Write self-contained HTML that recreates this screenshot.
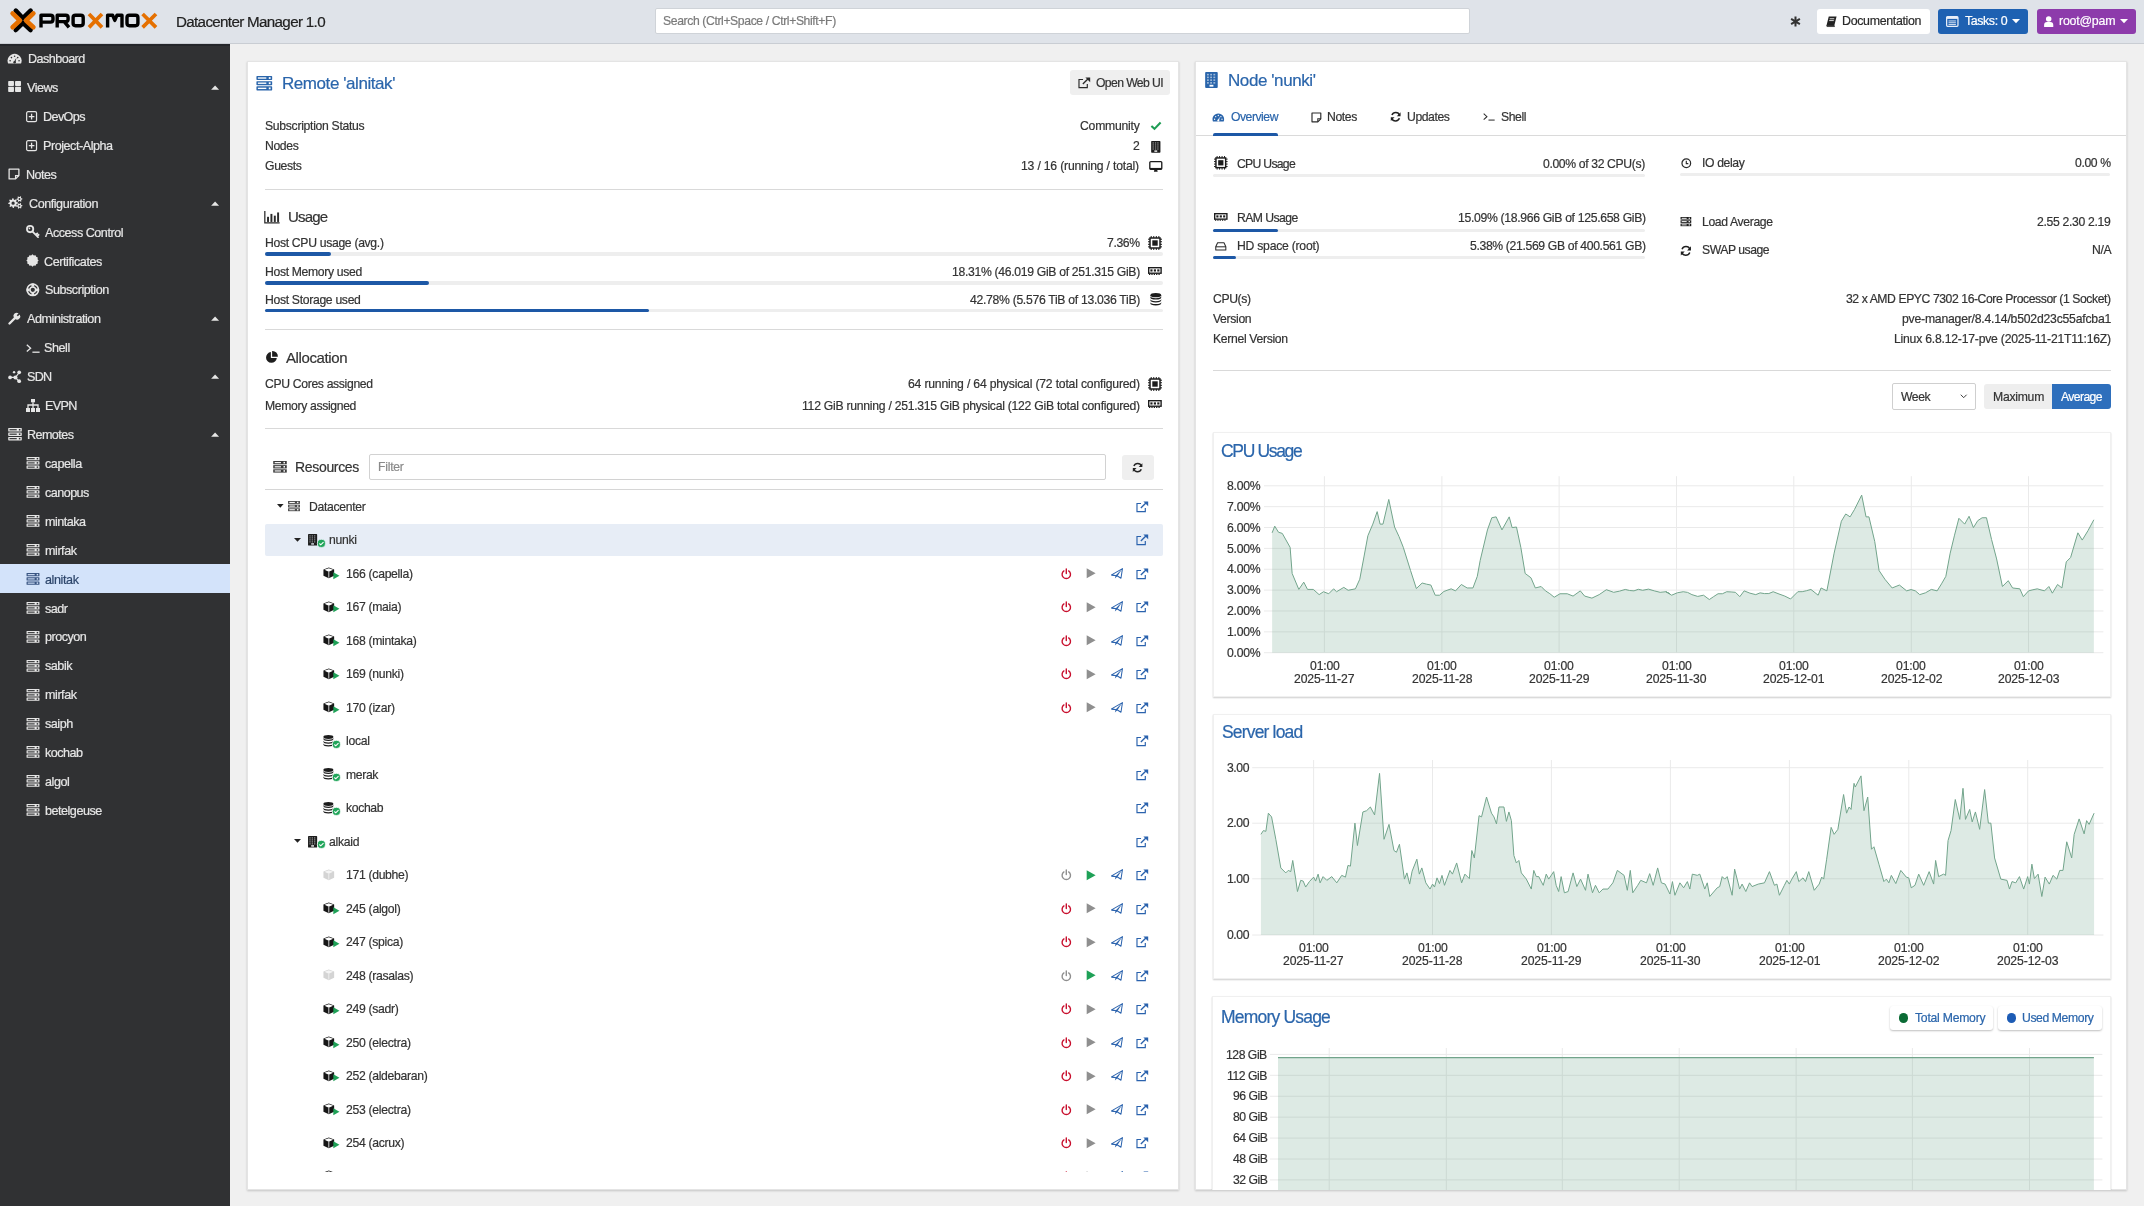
<!DOCTYPE html>
<html><head><meta charset="utf-8"><title>Proxmox Datacenter Manager</title><style>*{margin:0;padding:0;box-sizing:border-box}
html,body{width:2144px;height:1206px;overflow:hidden;background:#f0f0f0;font-family:"Liberation Sans",sans-serif;}
.t{position:absolute;white-space:nowrap;-webkit-font-smoothing:antialiased;will-change:transform;-webkit-text-stroke:0.2px currentColor;}
.r{position:absolute;}
.i{position:absolute;overflow:visible;}
</style></head><body>
<div class="r" style="left:0.00px;top:0.00px;width:2144.00px;height:43.00px;background:#dfe3e9;"></div>
<div class="r" style="left:0.00px;top:43.00px;width:2144.00px;height:1.00px;background:#c9cdd3;"></div>
<svg class="i" style="left:9px;top:8px" width="150" height="26" viewBox="9 8 150 26"><path d="M15.8 10.6 L22.9 18.2 L30.6 10.6" fill="none" stroke="#000" stroke-width="4.6" stroke-linecap="round" stroke-linejoin="round"/><path d="M15.8 30.0 L22.9 22.8 L30.6 30.0" fill="none" stroke="#000" stroke-width="4.6" stroke-linecap="round" stroke-linejoin="round"/><path d="M12.6 13.4 L19.9 20.5 L12.6 27.2" fill="none" stroke="#e57000" stroke-width="4.6" stroke-linecap="round" stroke-linejoin="round"/><path d="M33.4 13.4 L26.0 20.5 L33.4 27.2" fill="none" stroke="#e57000" stroke-width="4.6" stroke-linecap="round" stroke-linejoin="round"/><path d="M41 27.4 V15.2 H50.5 Q53 15.2 53 17.7 V19.6 Q53 22.1 50.5 22.1 H42.7" fill="none" stroke="#000" stroke-width="3.4" stroke-linejoin="round"/><path d="M57.2 27.4 V15.2 H65.8 Q68.1 15.2 68.1 17.5 V19.3 Q68.1 21.6 65.8 21.6 H58.9 M64.2 21.6 L69 27.4" fill="none" stroke="#000" stroke-width="3.4" stroke-linejoin="round"/><rect x="73.1" y="15.2" width="10.1" height="10.5" rx="2.4" fill="none" stroke="#000" stroke-width="3.4"/><path d="M89.0 14.0 L102.0 27.4 M102.0 14.0 L89.0 27.4" stroke="#e57000" stroke-width="3.7"/><path d="M107.6 27.4 V15.2 H112.6 L114.8 20.4 L117 15.2 H122 V27.4" fill="none" stroke="#000" stroke-width="3.4" stroke-linejoin="round"/><rect x="127" y="15.2" width="10.9" height="10.5" rx="2.4" fill="none" stroke="#000" stroke-width="3.4"/><path d="M142.6 14.0 L156.0 27.4 M156.0 14.0 L142.6 27.4" stroke="#e57000" stroke-width="3.7"/></svg>
<div class="t" style="top:11.58px;font-size:15.2px;line-height:19.0px;color:#212121;letter-spacing:-0.676px;left:176.00px;">Datacenter Manager 1.0</div>
<div class="r" style="left:654.50px;top:8.40px;width:815.40px;height:26.00px;background:#ffffff;border:1px solid #cfd3d8;box-sizing:border-box;border-radius:2px;"></div>
<div class="t" style="top:14.20px;font-size:12.2px;line-height:15.25px;color:#7a7a7a;letter-spacing:-0.386px;left:663.00px;">Search (Ctrl+Space / Ctrl+Shift+F)</div>
<svg class="i" style="left:1790.00px;top:16.00px;" width="11.00" height="11.00" viewBox="0 0 12 12"><path d="M6 0.5 V11.5 M1.2 3.2 L10.8 8.8 M1.2 8.8 L10.8 3.2" stroke="#333" stroke-width="2.2"/></svg>
<div class="r" style="left:1817.00px;top:9.00px;width:113.00px;height:25.00px;background:#ffffff;border-radius:3px;"></div>
<svg class="i" style="left:1825.50px;top:15.50px;" width="11.00" height="11.00" viewBox="0 0 12 12"><path d="M3 0.5 H11.5 L9 10.5 H0.5 Z" fill="#222"/><path d="M0.5 10.5 H9 L9.3 11.5 H0.8" fill="none" stroke="#222" stroke-width="0.9"/><path d="M4 3 H9 M3.5 5 H8.5" stroke="#fff" stroke-width="0.9"/></svg>
<div class="t" style="top:14.40px;font-size:12.4px;line-height:15.5px;color:#2a2a2a;letter-spacing:-0.321px;left:1842.40px;">Documentation</div>
<div class="r" style="left:1938.30px;top:9.00px;width:89.60px;height:25.00px;background:#1e61b2;border-radius:3px;"></div>
<svg class="i" style="left:1946.40px;top:15.50px;" width="12.60" height="11.00" viewBox="0 0 14 12"><rect x="0.7" y="0.7" width="12.6" height="10.6" rx="1" fill="none" stroke="#e8eef8" stroke-width="1.4"/><rect x="0.7" y="0.7" width="12.6" height="2.4" fill="#e8eef8"/><path d="M2.8 5.4 H11 M2.8 7.4 H11 M2.8 9.4 H11" stroke="#e8eef8" stroke-width="1"/></svg>
<div class="t" style="top:14.40px;font-size:12.4px;line-height:15.5px;color:#ffffff;letter-spacing:-0.408px;left:1964.70px;">Tasks: 0</div>
<svg class="i" style="left:2012.40px;top:19.20px;" width="8.00" height="4.80" viewBox="0 0 10 6"><path d="M0 0 L5 5.4 L10 0 Z" fill="#fff"/></svg>
<div class="r" style="left:2036.50px;top:9.00px;width:99.50px;height:25.00px;background:#8d3bab;border-radius:3px;"></div>
<svg class="i" style="left:2044.20px;top:15.50px;" width="9.40" height="11.00" viewBox="0 0 10 12"><circle cx="5" cy="3.2" r="3" fill="#fff"/><path d="M0 12 V9.8 A3.2 3.2 0 0 1 3.2 6.6 H6.8 A3.2 3.2 0 0 1 10 9.8 V12 Z" fill="#fff"/></svg>
<div class="t" style="top:14.40px;font-size:12.4px;line-height:15.5px;color:#ffffff;letter-spacing:-0.222px;left:2058.90px;">root@pam</div>
<svg class="i" style="left:2119.50px;top:19.20px;" width="8.00" height="4.80" viewBox="0 0 10 6"><path d="M0 0 L5 5.4 L10 0 Z" fill="#fff"/></svg>
<div class="r" style="left:0.00px;top:44.00px;width:230.00px;height:1162.00px;background:#303133;"></div>
<div class="r" style="left:0.00px;top:44.00px;width:230.00px;height:1.50px;background:#24262a;"></div>
<svg class="i" style="left:7.30px;top:52.10px;" width="15.20" height="13.30" viewBox="0 0 16 14"><path d="M1.2 12.2 A7.4 7.4 0 1 1 14.8 12.2 Z" fill="#e6e6e6"/><circle cx="3.3" cy="9.2" r="0.85" fill="#303133"/><circle cx="4.7" cy="5.9" r="0.85" fill="#303133"/><circle cx="8" cy="4.5" r="0.85" fill="#303133"/><circle cx="11.3" cy="5.9" r="0.85" fill="#303133"/><circle cx="12.7" cy="9.2" r="0.85" fill="#303133"/><path d="M7.2 10.6 L10.0 5.9 L8.9 11.0 Z" fill="#303133"/><circle cx="8" cy="10.8" r="1.3" fill="#303133"/></svg>
<div class="t" style="top:52.21px;font-size:12.6px;line-height:15.75px;color:#e6e6e6;letter-spacing:-0.544px;left:28.00px;">Dashboard</div>
<svg class="i" style="left:8.10px;top:81.01px;" width="13.20" height="11.00" viewBox="0 0 14 12"><rect x="0" y="0" width="6.3" height="5.4" rx="0.8" fill="#e6e6e6"/><rect x="7.5" y="0" width="6.5" height="5.4" rx="0.8" fill="#e6e6e6"/><rect x="0" y="6.4" width="6.3" height="5.6" rx="0.8" fill="#e6e6e6"/><rect x="7.5" y="6.4" width="6.5" height="5.6" rx="0.8" fill="#e6e6e6"/></svg>
<div class="t" style="top:81.12px;font-size:12.6px;line-height:15.75px;color:#e6e6e6;letter-spacing:-0.530px;left:26.60px;">Views</div>
<svg class="i" style="left:211.20px;top:85.01px;" width="8.20" height="4.80" viewBox="0 0 10 6"><path d="M0 6 L5 0.6 L10 6 Z" fill="#e6e6e6"/></svg>
<svg class="i" style="left:25.70px;top:110.72px;" width="11.20" height="11.20" viewBox="0 0 12 12"><rect x="0.7" y="0.7" width="10.6" height="10.6" rx="1.5" fill="none" stroke="#e6e6e6" stroke-width="1.3"/><path d="M6 3v6M3 6h6" stroke="#e6e6e6" stroke-width="1.4"/></svg>
<div class="t" style="top:110.03px;font-size:12.6px;line-height:15.75px;color:#e6e6e6;letter-spacing:-0.602px;left:42.50px;">DevOps</div>
<svg class="i" style="left:25.70px;top:139.63px;" width="11.20" height="11.20" viewBox="0 0 12 12"><rect x="0.7" y="0.7" width="10.6" height="10.6" rx="1.5" fill="none" stroke="#e6e6e6" stroke-width="1.3"/><path d="M6 3v6M3 6h6" stroke="#e6e6e6" stroke-width="1.4"/></svg>
<div class="t" style="top:138.94px;font-size:12.6px;line-height:15.75px;color:#e6e6e6;letter-spacing:-0.462px;left:42.50px;">Project-Alpha</div>
<svg class="i" style="left:8.10px;top:168.14px;" width="12.00" height="12.00" viewBox="0 0 13 13"><path d="M1.2 1.2 H11.8 V8.2 L8.2 11.8 H1.2 Z" fill="none" stroke="#e6e6e6" stroke-width="1.4" stroke-linejoin="round"/><path d="M11.8 8.2 H8.2 V11.8" fill="none" stroke="#e6e6e6" stroke-width="1.3"/></svg>
<div class="t" style="top:167.85px;font-size:12.6px;line-height:15.75px;color:#e6e6e6;letter-spacing:-0.522px;left:26.30px;">Notes</div>
<svg class="i" style="left:8.10px;top:196.45px;" width="14.60" height="12.80" viewBox="0 0 16 14"><path fill-rule="evenodd" fill="#e6e6e6" d="M10.94 7.01 L10.99 8.06 L9.38 8.75 L9.13 9.47 L9.94 11.02 L9.23 11.80 L7.61 11.15 L6.91 11.47 L6.39 13.14 L5.34 13.19 L4.65 11.58 L3.93 11.33 L2.38 12.14 L1.60 11.43 L2.25 9.81 L1.93 9.11 L0.26 8.59 L0.21 7.54 L1.82 6.85 L2.07 6.13 L1.26 4.58 L1.97 3.80 L3.59 4.45 L4.29 4.13 L4.81 2.46 L5.86 2.41 L6.55 4.02 L7.27 4.27 L8.82 3.46 L9.60 4.17 L8.95 5.79 L9.27 6.49 Z M7.40 7.80 A1.8 1.8 0 1 0 3.80 7.80 A1.8 1.8 0 1 0 7.40 7.80 Z"/><path fill-rule="evenodd" fill="#e6e6e6" d="M15.74 2.68 L15.79 3.51 L14.68 4.01 L14.43 4.52 L14.71 5.71 L14.02 6.17 L13.03 5.46 L12.46 5.50 L11.57 6.33 L10.82 5.96 L10.95 4.75 L10.63 4.27 L9.46 3.92 L9.41 3.09 L10.52 2.59 L10.77 2.08 L10.49 0.89 L11.18 0.43 L12.17 1.14 L12.74 1.10 L13.63 0.27 L14.38 0.64 L14.25 1.85 L14.57 2.33 Z M13.60 3.30 A1.0 1.0 0 1 0 11.60 3.30 A1.0 1.0 0 1 0 13.60 3.30 Z"/><path fill-rule="evenodd" fill="#e6e6e6" d="M15.74 10.18 L15.79 11.01 L14.68 11.51 L14.43 12.02 L14.71 13.21 L14.02 13.67 L13.03 12.96 L12.46 13.00 L11.57 13.83 L10.82 13.46 L10.95 12.25 L10.63 11.77 L9.46 11.42 L9.41 10.59 L10.52 10.09 L10.77 9.58 L10.49 8.39 L11.18 7.93 L12.17 8.64 L12.74 8.60 L13.63 7.77 L14.38 8.14 L14.25 9.35 L14.57 9.83 Z M13.60 10.80 A1.0 1.0 0 1 0 11.60 10.80 A1.0 1.0 0 1 0 13.60 10.80 Z"/></svg>
<div class="t" style="top:196.76px;font-size:12.6px;line-height:15.75px;color:#e6e6e6;letter-spacing:-0.458px;left:28.60px;">Configuration</div>
<svg class="i" style="left:211.20px;top:200.65px;" width="8.20" height="4.80" viewBox="0 0 10 6"><path d="M0 6 L5 0.6 L10 6 Z" fill="#e6e6e6"/></svg>
<svg class="i" style="left:25.60px;top:225.36px;" width="13.40" height="13.40" viewBox="0 0 14 14"><circle cx="4.3" cy="4.3" r="3.3" fill="none" stroke="#e6e6e6" stroke-width="1.9"/><circle cx="3.6" cy="3.6" r="0.9" fill="#e6e6e6"/><path d="M6.6 6.6 L12.6 12.6 M10.2 10.2 L11.8 8.8 M11.6 11.6 L13.2 10.2" stroke="#e6e6e6" stroke-width="1.9" stroke-linecap="round"/></svg>
<div class="t" style="top:225.67px;font-size:12.6px;line-height:15.75px;color:#e6e6e6;letter-spacing:-0.480px;left:45.30px;">Access Control</div>
<svg class="i" style="left:25.60px;top:254.37px;" width="13.00" height="13.00" viewBox="0 0 14 14"><path d="M13.60 7.00 L12.41 8.45 L12.72 10.30 L10.96 10.96 L10.30 12.72 L8.45 12.41 L7.00 13.60 L5.55 12.41 L3.70 12.72 L3.04 10.96 L1.28 10.30 L1.59 8.45 L0.40 7.00 L1.59 5.55 L1.28 3.70 L3.04 3.04 L3.70 1.28 L5.55 1.59 L7.00 0.40 L8.45 1.59 L10.30 1.28 L10.96 3.04 L12.72 3.70 L12.41 5.55 Z" fill="#e6e6e6"/></svg>
<div class="t" style="top:254.58px;font-size:12.6px;line-height:15.75px;color:#e6e6e6;letter-spacing:-0.417px;left:43.60px;">Certificates</div>
<svg class="i" style="left:25.60px;top:282.98px;" width="13.60" height="13.60" viewBox="0 0 14 14"><circle cx="7" cy="7" r="5.9" fill="none" stroke="#e6e6e6" stroke-width="1.7"/><circle cx="7" cy="7" r="2.9" fill="none" stroke="#e6e6e6" stroke-width="1.5"/><path d="M7 0.6 V3.8 M7 10.2 V13.4 M0.6 7 H3.8 M10.2 7 H13.4" stroke="#e6e6e6" stroke-width="2.8"/></svg>
<div class="t" style="top:283.49px;font-size:12.6px;line-height:15.75px;color:#e6e6e6;letter-spacing:-0.459px;left:45.30px;">Subscription</div>
<svg class="i" style="left:8.10px;top:312.09px;" width="13.00" height="13.00" viewBox="0 0 14 14"><path d="M1.6 12.4 L7.0 7.0" stroke="#e6e6e6" stroke-width="2.6" stroke-linecap="round"/><path d="M6.2 6.0 A3.6 3.6 0 0 1 11.4 1.4 L9.4 3.4 L10.6 4.6 L12.6 2.6 A3.6 3.6 0 0 1 8.0 7.8 Z" fill="#e6e6e6"/></svg>
<div class="t" style="top:312.40px;font-size:12.6px;line-height:15.75px;color:#e6e6e6;letter-spacing:-0.453px;left:26.70px;">Administration</div>
<svg class="i" style="left:211.20px;top:316.29px;" width="8.20" height="4.80" viewBox="0 0 10 6"><path d="M0 6 L5 0.6 L10 6 Z" fill="#e6e6e6"/></svg>
<svg class="i" style="left:25.60px;top:344.20px;" width="14.00" height="9.00" viewBox="0 0 14 9"><path d="M0.8 0.8 L4.6 4.2 L0.8 7.6" fill="none" stroke="#e6e6e6" stroke-width="1.3"/><path d="M6.4 8.2 H13.6" stroke="#e6e6e6" stroke-width="1.3"/></svg>
<div class="t" style="top:341.31px;font-size:12.6px;line-height:15.75px;color:#e6e6e6;letter-spacing:-0.445px;left:44.10px;">Shell</div>
<svg class="i" style="left:8.10px;top:370.21px;" width="14.00" height="13.00" viewBox="0 0 15 14"><path d="M3 8 L8 8 M8 8 L11.5 3.5 M8 8 L11.5 12" stroke="#e6e6e6" stroke-width="1.3"/><circle cx="2.2" cy="8" r="2" fill="#e6e6e6"/><circle cx="8" cy="8" r="2.2" fill="#e6e6e6"/><circle cx="12" cy="2.5" r="2" fill="#e6e6e6"/><circle cx="12" cy="12" r="2" fill="#e6e6e6"/><circle cx="6.5" cy="2.3" r="1.3" fill="#e6e6e6"/></svg>
<div class="t" style="top:370.22px;font-size:12.6px;line-height:15.75px;color:#e6e6e6;letter-spacing:-0.704px;left:27.40px;">SDN</div>
<svg class="i" style="left:211.20px;top:374.11px;" width="8.20" height="4.80" viewBox="0 0 10 6"><path d="M0 6 L5 0.6 L10 6 Z" fill="#e6e6e6"/></svg>
<svg class="i" style="left:25.60px;top:398.92px;" width="14.00" height="13.00" viewBox="0 0 14 13"><rect x="5" y="0" width="4" height="3.3" fill="#e6e6e6"/><path d="M7 3.3 V6 M2 9 V6 H12 V9 M7 6 V9" fill="none" stroke="#e6e6e6" stroke-width="1.3"/><rect x="0" y="9" width="4" height="4" fill="#e6e6e6"/><rect x="5" y="9" width="4" height="4" fill="#e6e6e6"/><rect x="10" y="9" width="4" height="4" fill="#e6e6e6"/></svg>
<div class="t" style="top:399.13px;font-size:12.6px;line-height:15.75px;color:#e6e6e6;letter-spacing:-0.681px;left:45.30px;">EVPN</div>
<svg class="i" style="left:8.10px;top:428.03px;" width="14.00" height="12.40" viewBox="0 0 14 12.8"><rect x="0" y="0" width="14" height="3.6" rx="0.6" fill="#e6e6e6"/><rect x="1.3" y="1.2" width="7.5" height="1.2" fill="#303133"/><rect x="11.0" y="1.0" width="1.6" height="1.6" fill="#303133"/><rect x="0" y="4.6" width="14" height="3.6" rx="0.6" fill="#e6e6e6"/><rect x="1.3" y="5.8" width="7.5" height="1.2" fill="#303133"/><rect x="11.0" y="5.6" width="1.6" height="1.6" fill="#303133"/><rect x="0" y="9.2" width="14" height="3.6" rx="0.6" fill="#e6e6e6"/><rect x="1.3" y="10.399999999999999" width="7.5" height="1.2" fill="#303133"/><rect x="11.0" y="10.2" width="1.6" height="1.6" fill="#303133"/></svg>
<div class="t" style="top:428.04px;font-size:12.6px;line-height:15.75px;color:#e6e6e6;letter-spacing:-0.572px;left:27.40px;">Remotes</div>
<svg class="i" style="left:211.20px;top:431.93px;" width="8.20" height="4.80" viewBox="0 0 10 6"><path d="M0 6 L5 0.6 L10 6 Z" fill="#e6e6e6"/></svg>
<svg class="i" style="left:25.60px;top:457.34px;" width="14.00" height="11.80" viewBox="0 0 14 12.8"><rect x="0" y="0" width="14" height="3.6" rx="0.6" fill="#e6e6e6"/><rect x="1.3" y="1.2" width="7.5" height="1.2" fill="#303133"/><rect x="11.0" y="1.0" width="1.6" height="1.6" fill="#303133"/><rect x="0" y="4.6" width="14" height="3.6" rx="0.6" fill="#e6e6e6"/><rect x="1.3" y="5.8" width="7.5" height="1.2" fill="#303133"/><rect x="11.0" y="5.6" width="1.6" height="1.6" fill="#303133"/><rect x="0" y="9.2" width="14" height="3.6" rx="0.6" fill="#e6e6e6"/><rect x="1.3" y="10.399999999999999" width="7.5" height="1.2" fill="#303133"/><rect x="11.0" y="10.2" width="1.6" height="1.6" fill="#303133"/></svg>
<div class="t" style="top:456.95px;font-size:12.6px;line-height:15.75px;color:#e6e6e6;letter-spacing:-0.453px;left:45.40px;">capella</div>
<svg class="i" style="left:25.60px;top:486.25px;" width="14.00" height="11.80" viewBox="0 0 14 12.8"><rect x="0" y="0" width="14" height="3.6" rx="0.6" fill="#e6e6e6"/><rect x="1.3" y="1.2" width="7.5" height="1.2" fill="#303133"/><rect x="11.0" y="1.0" width="1.6" height="1.6" fill="#303133"/><rect x="0" y="4.6" width="14" height="3.6" rx="0.6" fill="#e6e6e6"/><rect x="1.3" y="5.8" width="7.5" height="1.2" fill="#303133"/><rect x="11.0" y="5.6" width="1.6" height="1.6" fill="#303133"/><rect x="0" y="9.2" width="14" height="3.6" rx="0.6" fill="#e6e6e6"/><rect x="1.3" y="10.399999999999999" width="7.5" height="1.2" fill="#303133"/><rect x="11.0" y="10.2" width="1.6" height="1.6" fill="#303133"/></svg>
<div class="t" style="top:485.86px;font-size:12.6px;line-height:15.75px;color:#e6e6e6;letter-spacing:-0.540px;left:45.40px;">canopus</div>
<svg class="i" style="left:25.60px;top:515.16px;" width="14.00" height="11.80" viewBox="0 0 14 12.8"><rect x="0" y="0" width="14" height="3.6" rx="0.6" fill="#e6e6e6"/><rect x="1.3" y="1.2" width="7.5" height="1.2" fill="#303133"/><rect x="11.0" y="1.0" width="1.6" height="1.6" fill="#303133"/><rect x="0" y="4.6" width="14" height="3.6" rx="0.6" fill="#e6e6e6"/><rect x="1.3" y="5.8" width="7.5" height="1.2" fill="#303133"/><rect x="11.0" y="5.6" width="1.6" height="1.6" fill="#303133"/><rect x="0" y="9.2" width="14" height="3.6" rx="0.6" fill="#e6e6e6"/><rect x="1.3" y="10.399999999999999" width="7.5" height="1.2" fill="#303133"/><rect x="11.0" y="10.2" width="1.6" height="1.6" fill="#303133"/></svg>
<div class="t" style="top:514.77px;font-size:12.6px;line-height:15.75px;color:#e6e6e6;letter-spacing:-0.500px;left:45.40px;">mintaka</div>
<svg class="i" style="left:25.60px;top:544.07px;" width="14.00" height="11.80" viewBox="0 0 14 12.8"><rect x="0" y="0" width="14" height="3.6" rx="0.6" fill="#e6e6e6"/><rect x="1.3" y="1.2" width="7.5" height="1.2" fill="#303133"/><rect x="11.0" y="1.0" width="1.6" height="1.6" fill="#303133"/><rect x="0" y="4.6" width="14" height="3.6" rx="0.6" fill="#e6e6e6"/><rect x="1.3" y="5.8" width="7.5" height="1.2" fill="#303133"/><rect x="11.0" y="5.6" width="1.6" height="1.6" fill="#303133"/><rect x="0" y="9.2" width="14" height="3.6" rx="0.6" fill="#e6e6e6"/><rect x="1.3" y="10.399999999999999" width="7.5" height="1.2" fill="#303133"/><rect x="11.0" y="10.2" width="1.6" height="1.6" fill="#303133"/></svg>
<div class="t" style="top:543.68px;font-size:12.6px;line-height:15.75px;color:#e6e6e6;letter-spacing:-0.454px;left:45.40px;">mirfak</div>
<div class="r" style="left:0.00px;top:564.28px;width:230.00px;height:29.20px;background:#d3e3fa;"></div>
<svg class="i" style="left:25.60px;top:572.98px;" width="14.00" height="11.80" viewBox="0 0 14 12.8"><rect x="0" y="0" width="14" height="3.6" rx="0.6" fill="#3a5683"/><rect x="1.3" y="1.2" width="7.5" height="1.2" fill="#d3e3fa"/><rect x="11.0" y="1.0" width="1.6" height="1.6" fill="#d3e3fa"/><rect x="0" y="4.6" width="14" height="3.6" rx="0.6" fill="#3a5683"/><rect x="1.3" y="5.8" width="7.5" height="1.2" fill="#d3e3fa"/><rect x="11.0" y="5.6" width="1.6" height="1.6" fill="#d3e3fa"/><rect x="0" y="9.2" width="14" height="3.6" rx="0.6" fill="#3a5683"/><rect x="1.3" y="10.399999999999999" width="7.5" height="1.2" fill="#d3e3fa"/><rect x="11.0" y="10.2" width="1.6" height="1.6" fill="#d3e3fa"/></svg>
<div class="t" style="top:572.59px;font-size:12.6px;line-height:15.75px;color:#2d466b;letter-spacing:-0.413px;left:45.40px;">alnitak</div>
<svg class="i" style="left:25.60px;top:601.89px;" width="14.00" height="11.80" viewBox="0 0 14 12.8"><rect x="0" y="0" width="14" height="3.6" rx="0.6" fill="#e6e6e6"/><rect x="1.3" y="1.2" width="7.5" height="1.2" fill="#303133"/><rect x="11.0" y="1.0" width="1.6" height="1.6" fill="#303133"/><rect x="0" y="4.6" width="14" height="3.6" rx="0.6" fill="#e6e6e6"/><rect x="1.3" y="5.8" width="7.5" height="1.2" fill="#303133"/><rect x="11.0" y="5.6" width="1.6" height="1.6" fill="#303133"/><rect x="0" y="9.2" width="14" height="3.6" rx="0.6" fill="#e6e6e6"/><rect x="1.3" y="10.399999999999999" width="7.5" height="1.2" fill="#303133"/><rect x="11.0" y="10.2" width="1.6" height="1.6" fill="#303133"/></svg>
<div class="t" style="top:601.50px;font-size:12.6px;line-height:15.75px;color:#e6e6e6;letter-spacing:-0.486px;left:45.40px;">sadr</div>
<svg class="i" style="left:25.60px;top:630.80px;" width="14.00" height="11.80" viewBox="0 0 14 12.8"><rect x="0" y="0" width="14" height="3.6" rx="0.6" fill="#e6e6e6"/><rect x="1.3" y="1.2" width="7.5" height="1.2" fill="#303133"/><rect x="11.0" y="1.0" width="1.6" height="1.6" fill="#303133"/><rect x="0" y="4.6" width="14" height="3.6" rx="0.6" fill="#e6e6e6"/><rect x="1.3" y="5.8" width="7.5" height="1.2" fill="#303133"/><rect x="11.0" y="5.6" width="1.6" height="1.6" fill="#303133"/><rect x="0" y="9.2" width="14" height="3.6" rx="0.6" fill="#e6e6e6"/><rect x="1.3" y="10.399999999999999" width="7.5" height="1.2" fill="#303133"/><rect x="11.0" y="10.2" width="1.6" height="1.6" fill="#303133"/></svg>
<div class="t" style="top:630.41px;font-size:12.6px;line-height:15.75px;color:#e6e6e6;letter-spacing:-0.508px;left:45.40px;">procyon</div>
<svg class="i" style="left:25.60px;top:659.71px;" width="14.00" height="11.80" viewBox="0 0 14 12.8"><rect x="0" y="0" width="14" height="3.6" rx="0.6" fill="#e6e6e6"/><rect x="1.3" y="1.2" width="7.5" height="1.2" fill="#303133"/><rect x="11.0" y="1.0" width="1.6" height="1.6" fill="#303133"/><rect x="0" y="4.6" width="14" height="3.6" rx="0.6" fill="#e6e6e6"/><rect x="1.3" y="5.8" width="7.5" height="1.2" fill="#303133"/><rect x="11.0" y="5.6" width="1.6" height="1.6" fill="#303133"/><rect x="0" y="9.2" width="14" height="3.6" rx="0.6" fill="#e6e6e6"/><rect x="1.3" y="10.399999999999999" width="7.5" height="1.2" fill="#303133"/><rect x="11.0" y="10.2" width="1.6" height="1.6" fill="#303133"/></svg>
<div class="t" style="top:659.32px;font-size:12.6px;line-height:15.75px;color:#e6e6e6;letter-spacing:-0.467px;left:45.40px;">sabik</div>
<svg class="i" style="left:25.60px;top:688.62px;" width="14.00" height="11.80" viewBox="0 0 14 12.8"><rect x="0" y="0" width="14" height="3.6" rx="0.6" fill="#e6e6e6"/><rect x="1.3" y="1.2" width="7.5" height="1.2" fill="#303133"/><rect x="11.0" y="1.0" width="1.6" height="1.6" fill="#303133"/><rect x="0" y="4.6" width="14" height="3.6" rx="0.6" fill="#e6e6e6"/><rect x="1.3" y="5.8" width="7.5" height="1.2" fill="#303133"/><rect x="11.0" y="5.6" width="1.6" height="1.6" fill="#303133"/><rect x="0" y="9.2" width="14" height="3.6" rx="0.6" fill="#e6e6e6"/><rect x="1.3" y="10.399999999999999" width="7.5" height="1.2" fill="#303133"/><rect x="11.0" y="10.2" width="1.6" height="1.6" fill="#303133"/></svg>
<div class="t" style="top:688.23px;font-size:12.6px;line-height:15.75px;color:#e6e6e6;letter-spacing:-0.454px;left:45.40px;">mirfak</div>
<svg class="i" style="left:25.60px;top:717.53px;" width="14.00" height="11.80" viewBox="0 0 14 12.8"><rect x="0" y="0" width="14" height="3.6" rx="0.6" fill="#e6e6e6"/><rect x="1.3" y="1.2" width="7.5" height="1.2" fill="#303133"/><rect x="11.0" y="1.0" width="1.6" height="1.6" fill="#303133"/><rect x="0" y="4.6" width="14" height="3.6" rx="0.6" fill="#e6e6e6"/><rect x="1.3" y="5.8" width="7.5" height="1.2" fill="#303133"/><rect x="11.0" y="5.6" width="1.6" height="1.6" fill="#303133"/><rect x="0" y="9.2" width="14" height="3.6" rx="0.6" fill="#e6e6e6"/><rect x="1.3" y="10.399999999999999" width="7.5" height="1.2" fill="#303133"/><rect x="11.0" y="10.2" width="1.6" height="1.6" fill="#303133"/></svg>
<div class="t" style="top:717.14px;font-size:12.6px;line-height:15.75px;color:#e6e6e6;letter-spacing:-0.478px;left:45.40px;">saiph</div>
<svg class="i" style="left:25.60px;top:746.44px;" width="14.00" height="11.80" viewBox="0 0 14 12.8"><rect x="0" y="0" width="14" height="3.6" rx="0.6" fill="#e6e6e6"/><rect x="1.3" y="1.2" width="7.5" height="1.2" fill="#303133"/><rect x="11.0" y="1.0" width="1.6" height="1.6" fill="#303133"/><rect x="0" y="4.6" width="14" height="3.6" rx="0.6" fill="#e6e6e6"/><rect x="1.3" y="5.8" width="7.5" height="1.2" fill="#303133"/><rect x="11.0" y="5.6" width="1.6" height="1.6" fill="#303133"/><rect x="0" y="9.2" width="14" height="3.6" rx="0.6" fill="#e6e6e6"/><rect x="1.3" y="10.399999999999999" width="7.5" height="1.2" fill="#303133"/><rect x="11.0" y="10.2" width="1.6" height="1.6" fill="#303133"/></svg>
<div class="t" style="top:746.05px;font-size:12.6px;line-height:15.75px;color:#e6e6e6;letter-spacing:-0.537px;left:45.40px;">kochab</div>
<svg class="i" style="left:25.60px;top:775.35px;" width="14.00" height="11.80" viewBox="0 0 14 12.8"><rect x="0" y="0" width="14" height="3.6" rx="0.6" fill="#e6e6e6"/><rect x="1.3" y="1.2" width="7.5" height="1.2" fill="#303133"/><rect x="11.0" y="1.0" width="1.6" height="1.6" fill="#303133"/><rect x="0" y="4.6" width="14" height="3.6" rx="0.6" fill="#e6e6e6"/><rect x="1.3" y="5.8" width="7.5" height="1.2" fill="#303133"/><rect x="11.0" y="5.6" width="1.6" height="1.6" fill="#303133"/><rect x="0" y="9.2" width="14" height="3.6" rx="0.6" fill="#e6e6e6"/><rect x="1.3" y="10.399999999999999" width="7.5" height="1.2" fill="#303133"/><rect x="11.0" y="10.2" width="1.6" height="1.6" fill="#303133"/></svg>
<div class="t" style="top:774.96px;font-size:12.6px;line-height:15.75px;color:#e6e6e6;letter-spacing:-0.423px;left:45.40px;">algol</div>
<svg class="i" style="left:25.60px;top:804.26px;" width="14.00" height="11.80" viewBox="0 0 14 12.8"><rect x="0" y="0" width="14" height="3.6" rx="0.6" fill="#e6e6e6"/><rect x="1.3" y="1.2" width="7.5" height="1.2" fill="#303133"/><rect x="11.0" y="1.0" width="1.6" height="1.6" fill="#303133"/><rect x="0" y="4.6" width="14" height="3.6" rx="0.6" fill="#e6e6e6"/><rect x="1.3" y="5.8" width="7.5" height="1.2" fill="#303133"/><rect x="11.0" y="5.6" width="1.6" height="1.6" fill="#303133"/><rect x="0" y="9.2" width="14" height="3.6" rx="0.6" fill="#e6e6e6"/><rect x="1.3" y="10.399999999999999" width="7.5" height="1.2" fill="#303133"/><rect x="11.0" y="10.2" width="1.6" height="1.6" fill="#303133"/></svg>
<div class="t" style="top:803.87px;font-size:12.6px;line-height:15.75px;color:#e6e6e6;letter-spacing:-0.489px;left:45.40px;">betelgeuse</div>
<div class="r" style="left:247.00px;top:61.00px;width:932.00px;height:1128.50px;background:#ffffff;border:1px solid #e4e4e4;box-shadow:0 1px 2px rgba(0,0,0,0.18);"></div>
<svg class="i" style="left:256.30px;top:75.60px;" width="16.60" height="14.40" viewBox="0 0 14 12.8"><rect x="0" y="0" width="14" height="3.6" rx="0.6" fill="#2a65ab"/><rect x="1.3" y="1.2" width="7.5" height="1.2" fill="#fff"/><rect x="11.0" y="1.0" width="1.6" height="1.6" fill="#fff"/><rect x="0" y="4.6" width="14" height="3.6" rx="0.6" fill="#2a65ab"/><rect x="1.3" y="5.8" width="7.5" height="1.2" fill="#fff"/><rect x="11.0" y="5.6" width="1.6" height="1.6" fill="#fff"/><rect x="0" y="9.2" width="14" height="3.6" rx="0.6" fill="#2a65ab"/><rect x="1.3" y="10.399999999999999" width="7.5" height="1.2" fill="#fff"/><rect x="11.0" y="10.2" width="1.6" height="1.6" fill="#fff"/></svg>
<div class="t" style="top:72.53px;font-size:17px;line-height:21.25px;color:#2a65ab;letter-spacing:-0.432px;left:282.00px;">Remote 'alnitak'</div>
<div class="r" style="left:1070.20px;top:70.40px;width:100.30px;height:24.20px;background:#efefef;border-radius:3px;"></div>
<svg class="i" style="left:1078.00px;top:76.50px;" width="12.60" height="11.60" viewBox="0 0 13 12"><path d="M9.6 7.2 V11 H1 V2.6 H5.2" fill="none" stroke="#2a2a2a" stroke-width="1.2"/><path d="M5 7.2 L11 1.4" stroke="#2a2a2a" stroke-width="1.4"/><path d="M7.6 0.4 H12.6 V5.4 Z" fill="#2a2a2a"/></svg>
<div class="t" style="top:76.20px;font-size:12.2px;line-height:15.25px;color:#333333;letter-spacing:-0.609px;left:1095.50px;">Open Web UI</div>
<div class="t" style="top:119.10px;font-size:12.2px;line-height:15.25px;color:#333333;letter-spacing:-0.295px;left:265.00px;">Subscription Status</div>
<div class="t" style="top:119.10px;font-size:12.2px;line-height:15.25px;color:#333333;letter-spacing:-0.225px;right:1004.58px;">Community</div>
<svg class="i" style="left:1149.80px;top:121.40px;" width="12.00" height="9.60" viewBox="0 0 12 10"><path d="M1.2 5.2 L4.4 8.2 L10.8 1.6" fill="none" stroke="#1f9d55" stroke-width="2.2"/></svg>
<div class="t" style="top:139.20px;font-size:12.2px;line-height:15.25px;color:#333333;letter-spacing:-0.376px;left:265.00px;">Nodes</div>
<div class="t" style="top:139.20px;font-size:12.2px;line-height:15.25px;color:#333333;letter-spacing:-0.362px;right:1004.44px;">2</div>
<svg class="i" style="left:1150.60px;top:140.60px;" width="9.60" height="11.80" viewBox="0 0 11 14"><rect x="0" y="0" width="11" height="14" rx="0.8" fill="#1c1c1c"/><rect x="1.60" y="1.60" width="1.6" height="1.4" fill="#fff" opacity="0.55"/><rect x="4.40" y="1.60" width="1.6" height="1.4" fill="#fff" opacity="0.55"/><rect x="7.20" y="1.60" width="1.6" height="1.4" fill="#fff" opacity="0.55"/><rect x="1.60" y="4.00" width="1.6" height="1.4" fill="#fff" opacity="0.55"/><rect x="4.40" y="4.00" width="1.6" height="1.4" fill="#fff" opacity="0.55"/><rect x="7.20" y="4.00" width="1.6" height="1.4" fill="#fff" opacity="0.55"/><rect x="1.60" y="6.40" width="1.6" height="1.4" fill="#fff" opacity="0.55"/><rect x="4.40" y="6.40" width="1.6" height="1.4" fill="#fff" opacity="0.55"/><rect x="7.20" y="6.40" width="1.6" height="1.4" fill="#fff" opacity="0.55"/><rect x="1.60" y="8.80" width="1.6" height="1.4" fill="#fff" opacity="0.55"/><rect x="4.40" y="8.80" width="1.6" height="1.4" fill="#fff" opacity="0.55"/><rect x="7.20" y="8.80" width="1.6" height="1.4" fill="#fff" opacity="0.55"/><rect x="3.8" y="11.2" width="3.4" height="1.6" fill="#fff"/></svg>
<div class="t" style="top:159.30px;font-size:12.2px;line-height:15.25px;color:#333333;letter-spacing:-0.343px;left:265.00px;">Guests</div>
<div class="t" style="top:159.30px;font-size:12.2px;line-height:15.25px;color:#333333;letter-spacing:-0.189px;right:1004.61px;">13 / 16 (running / total)</div>
<svg class="i" style="left:1148.60px;top:160.80px;" width="13.60" height="11.40" viewBox="0 0 14 12"><rect x="0.7" y="0.7" width="12.6" height="8" rx="1" fill="none" stroke="#1c1c1c" stroke-width="1.4"/><rect x="0.7" y="7.3" width="12.6" height="1.5" fill="#1c1c1c"/><path d="M5 11.3 H9 L8.4 9 H5.6 Z" fill="#1c1c1c"/></svg>
<div class="r" style="left:265.00px;top:188.80px;width:897.50px;height:1.10px;background:#d9d9d9;"></div>
<svg class="i" style="left:264.40px;top:210.80px;" width="15.80" height="12.60" viewBox="0 0 16 13"><path d="M0.7 0 V12.3 H16" fill="none" stroke="#2b2b2b" stroke-width="1.3"/><rect x="3" y="6" width="2" height="5.3" fill="#2b2b2b"/><rect x="6.5" y="3" width="2" height="8.3" fill="#2b2b2b"/><rect x="10" y="4.8" width="2" height="6.5" fill="#2b2b2b"/><rect x="13.4" y="1.5" width="2" height="9.8" fill="#2b2b2b"/></svg>
<div class="t" style="top:208.18px;font-size:15px;line-height:18.75px;color:#333333;letter-spacing:-0.809px;left:288.30px;">Usage</div>
<div class="t" style="top:236.40px;font-size:12.2px;line-height:15.25px;color:#333333;letter-spacing:-0.318px;left:265.00px;">Host CPU usage (avg.)</div>
<div class="t" style="top:236.40px;font-size:12.2px;line-height:15.25px;color:#333333;letter-spacing:-0.369px;right:1004.43px;">7.36%</div>
<svg class="i" style="left:1148.00px;top:236.00px;" width="14.00" height="14.00" viewBox="0 0 14 14"><rect x="2" y="2" width="10" height="10" fill="none" stroke="#1c1c1c" stroke-width="1.5"/><rect x="4.3" y="4.3" width="5.4" height="5.4" fill="#1c1c1c"/><rect x="2.70" y="0" width="1" height="2" fill="#1c1c1c"/><rect x="2.70" y="12" width="1" height="2" fill="#1c1c1c"/><rect x="0" y="2.70" width="2" height="1" fill="#1c1c1c"/><rect x="12" y="2.70" width="2" height="1" fill="#1c1c1c"/><rect x="5.25" y="0" width="1" height="2" fill="#1c1c1c"/><rect x="5.25" y="12" width="1" height="2" fill="#1c1c1c"/><rect x="0" y="5.25" width="2" height="1" fill="#1c1c1c"/><rect x="12" y="5.25" width="2" height="1" fill="#1c1c1c"/><rect x="7.80" y="0" width="1" height="2" fill="#1c1c1c"/><rect x="7.80" y="12" width="1" height="2" fill="#1c1c1c"/><rect x="0" y="7.80" width="2" height="1" fill="#1c1c1c"/><rect x="12" y="7.80" width="2" height="1" fill="#1c1c1c"/><rect x="10.35" y="0" width="1" height="2" fill="#1c1c1c"/><rect x="10.35" y="12" width="1" height="2" fill="#1c1c1c"/><rect x="0" y="10.35" width="2" height="1" fill="#1c1c1c"/><rect x="12" y="10.35" width="2" height="1" fill="#1c1c1c"/></svg>
<div class="r" style="left:265.00px;top:252.20px;width:897.50px;height:3.40px;background:#eeeeee;border-radius:2px;"></div>
<div class="r" style="left:265.00px;top:252.20px;width:66.06px;height:3.40px;background:#1d58a6;border-radius:2px;"></div>
<div class="t" style="top:265.40px;font-size:12.2px;line-height:15.25px;color:#333333;letter-spacing:-0.341px;left:265.00px;">Host Memory used</div>
<div class="t" style="top:265.40px;font-size:12.2px;line-height:15.25px;color:#333333;letter-spacing:-0.311px;right:1004.49px;">18.31% (46.019 GiB of 251.315 GiB)</div>
<svg class="i" style="left:1148.20px;top:267.00px;" width="13.80" height="7.90" viewBox="0 0 14 8"><rect x="0.7" y="0.7" width="12.6" height="5.6" fill="none" stroke="#1c1c1c" stroke-width="1.4"/><rect x="2.4" y="2.4" width="2.2" height="2.2" fill="#1c1c1c"/><rect x="5.9" y="2.4" width="2.2" height="2.2" fill="#1c1c1c"/><rect x="9.4" y="2.4" width="2.2" height="2.2" fill="#1c1c1c"/><path d="M1 7.4 H13" stroke="#1c1c1c" stroke-width="1.2" stroke-dasharray="1.3 1.1"/></svg>
<div class="r" style="left:265.00px;top:281.20px;width:897.50px;height:3.40px;background:#eeeeee;border-radius:2px;"></div>
<div class="r" style="left:265.00px;top:281.20px;width:164.33px;height:3.40px;background:#1d58a6;border-radius:2px;"></div>
<div class="t" style="top:293.30px;font-size:12.2px;line-height:15.25px;color:#333333;letter-spacing:-0.317px;left:265.00px;">Host Storage used</div>
<div class="t" style="top:293.30px;font-size:12.2px;line-height:15.25px;color:#333333;letter-spacing:-0.299px;right:1004.50px;">42.78% (5.576 TiB of 13.036 TiB)</div>
<svg class="i" style="left:1149.50px;top:293.30px;" width="11.60" height="12.60" viewBox="0 0 12 13"><ellipse cx="6" cy="2.2" rx="5.6" ry="2.2" fill="#1c1c1c"/><path d="M0.4 3.1999999999999997 V4.6 A5.6 2.2 0 0 0 11.6 4.6 V3.1999999999999997 A5.6 2.2 0 0 1 0.4 3.1999999999999997 Z" fill="#1c1c1c"/><path d="M0.4 6.199999999999999 V7.6 A5.6 2.2 0 0 0 11.6 7.6 V6.199999999999999 A5.6 2.2 0 0 1 0.4 6.199999999999999 Z" fill="#1c1c1c"/><path d="M0.4 9.2 V10.6 A5.6 2.2 0 0 0 11.6 10.6 V9.2 A5.6 2.2 0 0 1 0.4 9.2 Z" fill="#1c1c1c"/></svg>
<div class="r" style="left:265.00px;top:309.10px;width:897.50px;height:3.40px;background:#eeeeee;border-radius:2px;"></div>
<div class="r" style="left:265.00px;top:309.10px;width:383.95px;height:3.40px;background:#1d58a6;border-radius:2px;"></div>
<div class="r" style="left:265.00px;top:329.30px;width:897.50px;height:1.10px;background:#d9d9d9;"></div>
<svg class="i" style="left:264.80px;top:351.00px;" width="13.20" height="12.60" viewBox="0 0 14 14"><path d="M6.2 1.2 A6 6 0 1 0 12.8 7.8 H6.2 Z" fill="#1e1e1e"/><path d="M7.6 0 A6 6 0 0 1 14 6.4 H7.6 Z" fill="#1e1e1e"/></svg>
<div class="t" style="top:348.78px;font-size:15px;line-height:18.75px;color:#333333;letter-spacing:-0.390px;left:286.40px;">Allocation</div>
<div class="t" style="top:377.20px;font-size:12.2px;line-height:15.25px;color:#333333;letter-spacing:-0.337px;left:265.00px;">CPU Cores assigned</div>
<div class="t" style="top:377.20px;font-size:12.2px;line-height:15.25px;color:#333333;letter-spacing:-0.189px;right:1004.61px;">64 running / 64 physical (72 total configured)</div>
<svg class="i" style="left:1148.00px;top:376.60px;" width="14.00" height="14.00" viewBox="0 0 14 14"><rect x="2" y="2" width="10" height="10" fill="none" stroke="#1c1c1c" stroke-width="1.5"/><rect x="4.3" y="4.3" width="5.4" height="5.4" fill="#1c1c1c"/><rect x="2.70" y="0" width="1" height="2" fill="#1c1c1c"/><rect x="2.70" y="12" width="1" height="2" fill="#1c1c1c"/><rect x="0" y="2.70" width="2" height="1" fill="#1c1c1c"/><rect x="12" y="2.70" width="2" height="1" fill="#1c1c1c"/><rect x="5.25" y="0" width="1" height="2" fill="#1c1c1c"/><rect x="5.25" y="12" width="1" height="2" fill="#1c1c1c"/><rect x="0" y="5.25" width="2" height="1" fill="#1c1c1c"/><rect x="12" y="5.25" width="2" height="1" fill="#1c1c1c"/><rect x="7.80" y="0" width="1" height="2" fill="#1c1c1c"/><rect x="7.80" y="12" width="1" height="2" fill="#1c1c1c"/><rect x="0" y="7.80" width="2" height="1" fill="#1c1c1c"/><rect x="12" y="7.80" width="2" height="1" fill="#1c1c1c"/><rect x="10.35" y="0" width="1" height="2" fill="#1c1c1c"/><rect x="10.35" y="12" width="1" height="2" fill="#1c1c1c"/><rect x="0" y="10.35" width="2" height="1" fill="#1c1c1c"/><rect x="12" y="10.35" width="2" height="1" fill="#1c1c1c"/></svg>
<div class="t" style="top:398.80px;font-size:12.2px;line-height:15.25px;color:#333333;letter-spacing:-0.342px;left:265.00px;">Memory assigned</div>
<div class="t" style="top:398.80px;font-size:12.2px;line-height:15.25px;color:#333333;letter-spacing:-0.260px;right:1004.54px;">112 GiB running / 251.315 GiB physical (122 GiB total configured)</div>
<svg class="i" style="left:1148.20px;top:400.40px;" width="13.80" height="7.90" viewBox="0 0 14 8"><rect x="0.7" y="0.7" width="12.6" height="5.6" fill="none" stroke="#1c1c1c" stroke-width="1.4"/><rect x="2.4" y="2.4" width="2.2" height="2.2" fill="#1c1c1c"/><rect x="5.9" y="2.4" width="2.2" height="2.2" fill="#1c1c1c"/><rect x="9.4" y="2.4" width="2.2" height="2.2" fill="#1c1c1c"/><path d="M1 7.4 H13" stroke="#1c1c1c" stroke-width="1.2" stroke-dasharray="1.3 1.1"/></svg>
<div class="r" style="left:265.00px;top:427.80px;width:897.50px;height:1.10px;background:#d9d9d9;"></div>
<svg class="i" style="left:272.90px;top:460.90px;" width="14.00" height="11.60" viewBox="0 0 14 12"><rect x="0" y="0" width="14" height="3.4" fill="#3a3a3a"/><rect x="1.5" y="1.1" width="6.5" height="1.2" fill="#fff"/><rect x="10.6" y="0.9" width="1.6" height="1.6" fill="#fff"/><rect x="0" y="4.3" width="14" height="3.4" fill="#3a3a3a"/><rect x="1.5" y="5.4" width="6.5" height="1.2" fill="#fff"/><rect x="10.6" y="5.2" width="1.6" height="1.6" fill="#fff"/><rect x="0" y="8.6" width="14" height="3.4" fill="#3a3a3a"/><rect x="1.5" y="9.7" width="6.5" height="1.2" fill="#fff"/><rect x="10.6" y="9.5" width="1.6" height="1.6" fill="#fff"/></svg>
<div class="t" style="top:459.25px;font-size:14px;line-height:17.5px;color:#333333;letter-spacing:-0.324px;left:295.30px;">Resources</div>
<div class="r" style="left:369.00px;top:453.90px;width:736.50px;height:26.60px;background:#ffffff;border:1px solid #d2d2d2;border-radius:2px;"></div>
<div class="t" style="top:460.30px;font-size:12.2px;line-height:15.25px;color:#8a8a8a;letter-spacing:-0.241px;left:377.90px;">Filter</div>
<div class="r" style="left:1122.00px;top:455.00px;width:32.00px;height:24.60px;background:#efefef;border-radius:3px;"></div>
<svg class="i" style="left:1132.40px;top:461.60px;" width="11.20" height="11.20" viewBox="0 0 14 14"><path d="M11.8 5.2 A5 5 0 0 0 2.4 5.0" fill="none" stroke="#222" stroke-width="1.8"/><path d="M13 1.6 V6.4 H8.4 Z" fill="#222"/><path d="M2.2 8.8 A5 5 0 0 0 11.6 9.0" fill="none" stroke="#222" stroke-width="1.8"/><path d="M1 12.4 V7.6 H5.6 Z" fill="#222"/></svg>
<div class="r" style="left:264.50px;top:488.70px;width:898.00px;height:1.10px;background:#d6d6d6;"></div>
<div class="r" style="left:248px;top:490px;width:930px;height:681.5px;overflow:hidden;">
<svg class="i" style="left:29.40px;top:14.10px;" width="6.60" height="4.20" viewBox="0 0 10 6"><path d="M0 0 L5 5.4 L10 0 Z" fill="#222"/></svg>
<svg class="i" style="left:40.00px;top:11.20px;" width="12.00" height="10.20" viewBox="0 0 14 12"><rect x="0" y="0" width="14" height="3.4" fill="#4a4a4a"/><rect x="1.5" y="1.1" width="6.5" height="1.2" fill="#fff"/><rect x="10.6" y="0.9" width="1.6" height="1.6" fill="#fff"/><rect x="0" y="4.3" width="14" height="3.4" fill="#4a4a4a"/><rect x="1.5" y="5.4" width="6.5" height="1.2" fill="#fff"/><rect x="10.6" y="5.2" width="1.6" height="1.6" fill="#fff"/><rect x="0" y="8.6" width="14" height="3.4" fill="#4a4a4a"/><rect x="1.5" y="9.7" width="6.5" height="1.2" fill="#fff"/><rect x="10.6" y="9.5" width="1.6" height="1.6" fill="#fff"/></svg>
<div class="t" style="top:9.70px;font-size:12.2px;line-height:15.25px;color:#333333;letter-spacing:-0.318px;left:60.80px;">Datacenter</div>
<svg class="i" style="left:887.60px;top:10.60px;" width="12.60" height="11.60" viewBox="0 0 13 12"><path d="M9.6 7.2 V11 H1 V2.6 H5.2" fill="none" stroke="#2a62ad" stroke-width="1.2"/><path d="M5 7.2 L11 1.4" stroke="#2a62ad" stroke-width="1.4"/><path d="M7.6 0.4 H12.6 V5.4 Z" fill="#2a62ad"/></svg>
<div class="r" style="left:16.50px;top:33.60px;width:898.00px;height:32.80px;background:#e7edf6;border-radius:2px;"></div>
<svg class="i" style="left:45.80px;top:47.60px;" width="7.00" height="4.20" viewBox="0 0 10 6"><path d="M0 0 L5 5.4 L10 0 Z" fill="#222"/></svg>
<svg class="i" style="left:59.60px;top:44.00px;" width="9.20" height="11.60" viewBox="0 0 11 14"><rect x="0" y="0" width="11" height="14" rx="0.8" fill="#1c1c1c"/><rect x="1.60" y="1.60" width="1.6" height="1.4" fill="#e7edf6" opacity="0.55"/><rect x="4.40" y="1.60" width="1.6" height="1.4" fill="#e7edf6" opacity="0.55"/><rect x="7.20" y="1.60" width="1.6" height="1.4" fill="#e7edf6" opacity="0.55"/><rect x="1.60" y="4.00" width="1.6" height="1.4" fill="#e7edf6" opacity="0.55"/><rect x="4.40" y="4.00" width="1.6" height="1.4" fill="#e7edf6" opacity="0.55"/><rect x="7.20" y="4.00" width="1.6" height="1.4" fill="#e7edf6" opacity="0.55"/><rect x="1.60" y="6.40" width="1.6" height="1.4" fill="#e7edf6" opacity="0.55"/><rect x="4.40" y="6.40" width="1.6" height="1.4" fill="#e7edf6" opacity="0.55"/><rect x="7.20" y="6.40" width="1.6" height="1.4" fill="#e7edf6" opacity="0.55"/><rect x="1.60" y="8.80" width="1.6" height="1.4" fill="#e7edf6" opacity="0.55"/><rect x="4.40" y="8.80" width="1.6" height="1.4" fill="#e7edf6" opacity="0.55"/><rect x="7.20" y="8.80" width="1.6" height="1.4" fill="#e7edf6" opacity="0.55"/><rect x="3.8" y="11.2" width="3.4" height="1.6" fill="#e7edf6"/></svg>
<svg class="i" style="left:68.60px;top:48.60px;" width="8.80" height="8.80" viewBox="0 0 10 10"><circle cx="5" cy="5" r="4.6" fill="#21a55a" stroke="#e7edf6" stroke-width="0.9"/><path d="M2.7 5.1 L4.3 6.6 L7.4 3.5" fill="none" stroke="#fff" stroke-width="1.3"/></svg>
<div class="t" style="top:43.20px;font-size:12.2px;line-height:15.25px;color:#333333;letter-spacing:-0.311px;left:80.60px;">nunki</div>
<svg class="i" style="left:887.60px;top:44.10px;" width="12.60" height="11.60" viewBox="0 0 13 12"><path d="M9.6 7.2 V11 H1 V2.6 H5.2" fill="none" stroke="#2a62ad" stroke-width="1.2"/><path d="M5 7.2 L11 1.4" stroke="#2a62ad" stroke-width="1.4"/><path d="M7.6 0.4 H12.6 V5.4 Z" fill="#2a62ad"/></svg>
<svg class="i" style="left:75.00px;top:77.40px;" width="11.60" height="11.60" viewBox="0 0 13 13"><path d="M6.5 0.5 L12.5 2.8 V9.8 L6.5 12.5 L0.5 9.8 V2.8 Z" fill="#161616"/><path d="M1.6 3.2 L6.5 5.2 L11.4 3.2 L6.5 1.5 Z" fill="#fff"/><path d="M6.5 5.2 V12" stroke="#fff" stroke-width="0.9"/></svg>
<svg class="i" style="left:85.20px;top:81.60px;" width="6.60" height="7.60" viewBox="0 0 10 11"><path d="M0.5 0.3 L9.8 5.5 L0.5 10.7 Z" fill="#1fa157"/></svg>
<div class="t" style="top:76.70px;font-size:12.2px;line-height:15.25px;color:#333333;letter-spacing:-0.289px;left:97.80px;">166 (capella)</div>
<svg class="i" style="left:813.00px;top:77.90px;" width="10.60" height="11.40" viewBox="0 0 12 13"><path d="M3.3 3.3 A4.8 4.8 0 1 0 8.7 3.3" fill="none" stroke="#c8102e" stroke-width="1.6" stroke-linecap="round"/><path d="M6 1 V6.4" stroke="#c8102e" stroke-width="1.6" stroke-linecap="round"/></svg>
<svg class="i" style="left:838.20px;top:78.40px;" width="10.00" height="10.60" viewBox="0 0 10 11"><path d="M0.5 0.3 L9.8 5.5 L0.5 10.7 Z" fill="#8f8f8f"/></svg>
<svg class="i" style="left:862.80px;top:77.80px;" width="12.00" height="11.20" viewBox="0 0 13 12"><path d="M0.6 7.4 L12.4 0.6 L10.8 11.0 L7 8.6 Z" fill="none" stroke="#2a62ad" stroke-width="1.1" stroke-linejoin="round"/><path d="M12.4 0.6 L5 8 L4.2 11.4 L7 8.6 Z" fill="#2a62ad"/><path d="M0.6 7.4 L5 8" stroke="#2a62ad" stroke-width="1.1"/></svg>
<svg class="i" style="left:887.60px;top:77.60px;" width="12.60" height="11.60" viewBox="0 0 13 12"><path d="M9.6 7.2 V11 H1 V2.6 H5.2" fill="none" stroke="#2a62ad" stroke-width="1.2"/><path d="M5 7.2 L11 1.4" stroke="#2a62ad" stroke-width="1.4"/><path d="M7.6 0.4 H12.6 V5.4 Z" fill="#2a62ad"/></svg>
<svg class="i" style="left:75.00px;top:110.90px;" width="11.60" height="11.60" viewBox="0 0 13 13"><path d="M6.5 0.5 L12.5 2.8 V9.8 L6.5 12.5 L0.5 9.8 V2.8 Z" fill="#161616"/><path d="M1.6 3.2 L6.5 5.2 L11.4 3.2 L6.5 1.5 Z" fill="#fff"/><path d="M6.5 5.2 V12" stroke="#fff" stroke-width="0.9"/></svg>
<svg class="i" style="left:85.20px;top:115.10px;" width="6.60" height="7.60" viewBox="0 0 10 11"><path d="M0.5 0.3 L9.8 5.5 L0.5 10.7 Z" fill="#1fa157"/></svg>
<div class="t" style="top:110.20px;font-size:12.2px;line-height:15.25px;color:#333333;letter-spacing:-0.311px;left:97.80px;">167 (maia)</div>
<svg class="i" style="left:813.00px;top:111.40px;" width="10.60" height="11.40" viewBox="0 0 12 13"><path d="M3.3 3.3 A4.8 4.8 0 1 0 8.7 3.3" fill="none" stroke="#c8102e" stroke-width="1.6" stroke-linecap="round"/><path d="M6 1 V6.4" stroke="#c8102e" stroke-width="1.6" stroke-linecap="round"/></svg>
<svg class="i" style="left:838.20px;top:111.90px;" width="10.00" height="10.60" viewBox="0 0 10 11"><path d="M0.5 0.3 L9.8 5.5 L0.5 10.7 Z" fill="#8f8f8f"/></svg>
<svg class="i" style="left:862.80px;top:111.30px;" width="12.00" height="11.20" viewBox="0 0 13 12"><path d="M0.6 7.4 L12.4 0.6 L10.8 11.0 L7 8.6 Z" fill="none" stroke="#2a62ad" stroke-width="1.1" stroke-linejoin="round"/><path d="M12.4 0.6 L5 8 L4.2 11.4 L7 8.6 Z" fill="#2a62ad"/><path d="M0.6 7.4 L5 8" stroke="#2a62ad" stroke-width="1.1"/></svg>
<svg class="i" style="left:887.60px;top:111.10px;" width="12.60" height="11.60" viewBox="0 0 13 12"><path d="M9.6 7.2 V11 H1 V2.6 H5.2" fill="none" stroke="#2a62ad" stroke-width="1.2"/><path d="M5 7.2 L11 1.4" stroke="#2a62ad" stroke-width="1.4"/><path d="M7.6 0.4 H12.6 V5.4 Z" fill="#2a62ad"/></svg>
<svg class="i" style="left:75.00px;top:144.40px;" width="11.60" height="11.60" viewBox="0 0 13 13"><path d="M6.5 0.5 L12.5 2.8 V9.8 L6.5 12.5 L0.5 9.8 V2.8 Z" fill="#161616"/><path d="M1.6 3.2 L6.5 5.2 L11.4 3.2 L6.5 1.5 Z" fill="#fff"/><path d="M6.5 5.2 V12" stroke="#fff" stroke-width="0.9"/></svg>
<svg class="i" style="left:85.20px;top:148.60px;" width="6.60" height="7.60" viewBox="0 0 10 11"><path d="M0.5 0.3 L9.8 5.5 L0.5 10.7 Z" fill="#1fa157"/></svg>
<div class="t" style="top:143.70px;font-size:12.2px;line-height:15.25px;color:#333333;letter-spacing:-0.306px;left:97.80px;">168 (mintaka)</div>
<svg class="i" style="left:813.00px;top:144.90px;" width="10.60" height="11.40" viewBox="0 0 12 13"><path d="M3.3 3.3 A4.8 4.8 0 1 0 8.7 3.3" fill="none" stroke="#c8102e" stroke-width="1.6" stroke-linecap="round"/><path d="M6 1 V6.4" stroke="#c8102e" stroke-width="1.6" stroke-linecap="round"/></svg>
<svg class="i" style="left:838.20px;top:145.40px;" width="10.00" height="10.60" viewBox="0 0 10 11"><path d="M0.5 0.3 L9.8 5.5 L0.5 10.7 Z" fill="#8f8f8f"/></svg>
<svg class="i" style="left:862.80px;top:144.80px;" width="12.00" height="11.20" viewBox="0 0 13 12"><path d="M0.6 7.4 L12.4 0.6 L10.8 11.0 L7 8.6 Z" fill="none" stroke="#2a62ad" stroke-width="1.1" stroke-linejoin="round"/><path d="M12.4 0.6 L5 8 L4.2 11.4 L7 8.6 Z" fill="#2a62ad"/><path d="M0.6 7.4 L5 8" stroke="#2a62ad" stroke-width="1.1"/></svg>
<svg class="i" style="left:887.60px;top:144.60px;" width="12.60" height="11.60" viewBox="0 0 13 12"><path d="M9.6 7.2 V11 H1 V2.6 H5.2" fill="none" stroke="#2a62ad" stroke-width="1.2"/><path d="M5 7.2 L11 1.4" stroke="#2a62ad" stroke-width="1.4"/><path d="M7.6 0.4 H12.6 V5.4 Z" fill="#2a62ad"/></svg>
<svg class="i" style="left:75.00px;top:177.90px;" width="11.60" height="11.60" viewBox="0 0 13 13"><path d="M6.5 0.5 L12.5 2.8 V9.8 L6.5 12.5 L0.5 9.8 V2.8 Z" fill="#161616"/><path d="M1.6 3.2 L6.5 5.2 L11.4 3.2 L6.5 1.5 Z" fill="#fff"/><path d="M6.5 5.2 V12" stroke="#fff" stroke-width="0.9"/></svg>
<svg class="i" style="left:85.20px;top:182.10px;" width="6.60" height="7.60" viewBox="0 0 10 11"><path d="M0.5 0.3 L9.8 5.5 L0.5 10.7 Z" fill="#1fa157"/></svg>
<div class="t" style="top:177.20px;font-size:12.2px;line-height:15.25px;color:#333333;letter-spacing:-0.296px;left:97.80px;">169 (nunki)</div>
<svg class="i" style="left:813.00px;top:178.40px;" width="10.60" height="11.40" viewBox="0 0 12 13"><path d="M3.3 3.3 A4.8 4.8 0 1 0 8.7 3.3" fill="none" stroke="#c8102e" stroke-width="1.6" stroke-linecap="round"/><path d="M6 1 V6.4" stroke="#c8102e" stroke-width="1.6" stroke-linecap="round"/></svg>
<svg class="i" style="left:838.20px;top:178.90px;" width="10.00" height="10.60" viewBox="0 0 10 11"><path d="M0.5 0.3 L9.8 5.5 L0.5 10.7 Z" fill="#8f8f8f"/></svg>
<svg class="i" style="left:862.80px;top:178.30px;" width="12.00" height="11.20" viewBox="0 0 13 12"><path d="M0.6 7.4 L12.4 0.6 L10.8 11.0 L7 8.6 Z" fill="none" stroke="#2a62ad" stroke-width="1.1" stroke-linejoin="round"/><path d="M12.4 0.6 L5 8 L4.2 11.4 L7 8.6 Z" fill="#2a62ad"/><path d="M0.6 7.4 L5 8" stroke="#2a62ad" stroke-width="1.1"/></svg>
<svg class="i" style="left:887.60px;top:178.10px;" width="12.60" height="11.60" viewBox="0 0 13 12"><path d="M9.6 7.2 V11 H1 V2.6 H5.2" fill="none" stroke="#2a62ad" stroke-width="1.2"/><path d="M5 7.2 L11 1.4" stroke="#2a62ad" stroke-width="1.4"/><path d="M7.6 0.4 H12.6 V5.4 Z" fill="#2a62ad"/></svg>
<svg class="i" style="left:75.00px;top:211.40px;" width="11.60" height="11.60" viewBox="0 0 13 13"><path d="M6.5 0.5 L12.5 2.8 V9.8 L6.5 12.5 L0.5 9.8 V2.8 Z" fill="#161616"/><path d="M1.6 3.2 L6.5 5.2 L11.4 3.2 L6.5 1.5 Z" fill="#fff"/><path d="M6.5 5.2 V12" stroke="#fff" stroke-width="0.9"/></svg>
<svg class="i" style="left:85.20px;top:215.60px;" width="6.60" height="7.60" viewBox="0 0 10 11"><path d="M0.5 0.3 L9.8 5.5 L0.5 10.7 Z" fill="#1fa157"/></svg>
<div class="t" style="top:210.70px;font-size:12.2px;line-height:15.25px;color:#333333;letter-spacing:-0.275px;left:97.80px;">170 (izar)</div>
<svg class="i" style="left:813.00px;top:211.90px;" width="10.60" height="11.40" viewBox="0 0 12 13"><path d="M3.3 3.3 A4.8 4.8 0 1 0 8.7 3.3" fill="none" stroke="#c8102e" stroke-width="1.6" stroke-linecap="round"/><path d="M6 1 V6.4" stroke="#c8102e" stroke-width="1.6" stroke-linecap="round"/></svg>
<svg class="i" style="left:838.20px;top:212.40px;" width="10.00" height="10.60" viewBox="0 0 10 11"><path d="M0.5 0.3 L9.8 5.5 L0.5 10.7 Z" fill="#8f8f8f"/></svg>
<svg class="i" style="left:862.80px;top:211.80px;" width="12.00" height="11.20" viewBox="0 0 13 12"><path d="M0.6 7.4 L12.4 0.6 L10.8 11.0 L7 8.6 Z" fill="none" stroke="#2a62ad" stroke-width="1.1" stroke-linejoin="round"/><path d="M12.4 0.6 L5 8 L4.2 11.4 L7 8.6 Z" fill="#2a62ad"/><path d="M0.6 7.4 L5 8" stroke="#2a62ad" stroke-width="1.1"/></svg>
<svg class="i" style="left:887.60px;top:211.60px;" width="12.60" height="11.60" viewBox="0 0 13 12"><path d="M9.6 7.2 V11 H1 V2.6 H5.2" fill="none" stroke="#2a62ad" stroke-width="1.2"/><path d="M5 7.2 L11 1.4" stroke="#2a62ad" stroke-width="1.4"/><path d="M7.6 0.4 H12.6 V5.4 Z" fill="#2a62ad"/></svg>
<svg class="i" style="left:75.40px;top:244.50px;" width="10.80" height="11.60" viewBox="0 0 12 13"><ellipse cx="6" cy="2.2" rx="5.6" ry="2.2" fill="#1c1c1c"/><path d="M0.4 3.1999999999999997 V4.6 A5.6 2.2 0 0 0 11.6 4.6 V3.1999999999999997 A5.6 2.2 0 0 1 0.4 3.1999999999999997 Z" fill="#1c1c1c"/><path d="M0.4 6.199999999999999 V7.6 A5.6 2.2 0 0 0 11.6 7.6 V6.199999999999999 A5.6 2.2 0 0 1 0.4 6.199999999999999 Z" fill="#1c1c1c"/><path d="M0.4 9.2 V10.6 A5.6 2.2 0 0 0 11.6 10.6 V9.2 A5.6 2.2 0 0 1 0.4 9.2 Z" fill="#1c1c1c"/></svg>
<svg class="i" style="left:83.80px;top:249.90px;" width="8.80" height="8.80" viewBox="0 0 10 10"><circle cx="5" cy="5" r="4.6" fill="#21a55a" stroke="#fff" stroke-width="0.9"/><path d="M2.7 5.1 L4.3 6.6 L7.4 3.5" fill="none" stroke="#fff" stroke-width="1.3"/></svg>
<div class="t" style="top:244.20px;font-size:12.2px;line-height:15.25px;color:#333333;letter-spacing:-0.267px;left:97.80px;">local</div>
<svg class="i" style="left:887.60px;top:245.10px;" width="12.60" height="11.60" viewBox="0 0 13 12"><path d="M9.6 7.2 V11 H1 V2.6 H5.2" fill="none" stroke="#2a62ad" stroke-width="1.2"/><path d="M5 7.2 L11 1.4" stroke="#2a62ad" stroke-width="1.4"/><path d="M7.6 0.4 H12.6 V5.4 Z" fill="#2a62ad"/></svg>
<svg class="i" style="left:75.40px;top:278.00px;" width="10.80" height="11.60" viewBox="0 0 12 13"><ellipse cx="6" cy="2.2" rx="5.6" ry="2.2" fill="#1c1c1c"/><path d="M0.4 3.1999999999999997 V4.6 A5.6 2.2 0 0 0 11.6 4.6 V3.1999999999999997 A5.6 2.2 0 0 1 0.4 3.1999999999999997 Z" fill="#1c1c1c"/><path d="M0.4 6.199999999999999 V7.6 A5.6 2.2 0 0 0 11.6 7.6 V6.199999999999999 A5.6 2.2 0 0 1 0.4 6.199999999999999 Z" fill="#1c1c1c"/><path d="M0.4 9.2 V10.6 A5.6 2.2 0 0 0 11.6 10.6 V9.2 A5.6 2.2 0 0 1 0.4 9.2 Z" fill="#1c1c1c"/></svg>
<svg class="i" style="left:83.80px;top:283.40px;" width="8.80" height="8.80" viewBox="0 0 10 10"><circle cx="5" cy="5" r="4.6" fill="#21a55a" stroke="#fff" stroke-width="0.9"/><path d="M2.7 5.1 L4.3 6.6 L7.4 3.5" fill="none" stroke="#fff" stroke-width="1.3"/></svg>
<div class="t" style="top:277.70px;font-size:12.2px;line-height:15.25px;color:#333333;letter-spacing:-0.361px;left:97.80px;">merak</div>
<svg class="i" style="left:887.60px;top:278.60px;" width="12.60" height="11.60" viewBox="0 0 13 12"><path d="M9.6 7.2 V11 H1 V2.6 H5.2" fill="none" stroke="#2a62ad" stroke-width="1.2"/><path d="M5 7.2 L11 1.4" stroke="#2a62ad" stroke-width="1.4"/><path d="M7.6 0.4 H12.6 V5.4 Z" fill="#2a62ad"/></svg>
<svg class="i" style="left:75.40px;top:311.50px;" width="10.80" height="11.60" viewBox="0 0 12 13"><ellipse cx="6" cy="2.2" rx="5.6" ry="2.2" fill="#1c1c1c"/><path d="M0.4 3.1999999999999997 V4.6 A5.6 2.2 0 0 0 11.6 4.6 V3.1999999999999997 A5.6 2.2 0 0 1 0.4 3.1999999999999997 Z" fill="#1c1c1c"/><path d="M0.4 6.199999999999999 V7.6 A5.6 2.2 0 0 0 11.6 7.6 V6.199999999999999 A5.6 2.2 0 0 1 0.4 6.199999999999999 Z" fill="#1c1c1c"/><path d="M0.4 9.2 V10.6 A5.6 2.2 0 0 0 11.6 10.6 V9.2 A5.6 2.2 0 0 1 0.4 9.2 Z" fill="#1c1c1c"/></svg>
<svg class="i" style="left:83.80px;top:316.90px;" width="8.80" height="8.80" viewBox="0 0 10 10"><circle cx="5" cy="5" r="4.6" fill="#21a55a" stroke="#fff" stroke-width="0.9"/><path d="M2.7 5.1 L4.3 6.6 L7.4 3.5" fill="none" stroke="#fff" stroke-width="1.3"/></svg>
<div class="t" style="top:311.20px;font-size:12.2px;line-height:15.25px;color:#333333;letter-spacing:-0.349px;left:97.80px;">kochab</div>
<svg class="i" style="left:887.60px;top:312.10px;" width="12.60" height="11.60" viewBox="0 0 13 12"><path d="M9.6 7.2 V11 H1 V2.6 H5.2" fill="none" stroke="#2a62ad" stroke-width="1.2"/><path d="M5 7.2 L11 1.4" stroke="#2a62ad" stroke-width="1.4"/><path d="M7.6 0.4 H12.6 V5.4 Z" fill="#2a62ad"/></svg>
<svg class="i" style="left:45.80px;top:349.10px;" width="7.00" height="4.20" viewBox="0 0 10 6"><path d="M0 0 L5 5.4 L10 0 Z" fill="#222"/></svg>
<svg class="i" style="left:59.60px;top:345.50px;" width="9.20" height="11.60" viewBox="0 0 11 14"><rect x="0" y="0" width="11" height="14" rx="0.8" fill="#1c1c1c"/><rect x="1.60" y="1.60" width="1.6" height="1.4" fill="#fff" opacity="0.55"/><rect x="4.40" y="1.60" width="1.6" height="1.4" fill="#fff" opacity="0.55"/><rect x="7.20" y="1.60" width="1.6" height="1.4" fill="#fff" opacity="0.55"/><rect x="1.60" y="4.00" width="1.6" height="1.4" fill="#fff" opacity="0.55"/><rect x="4.40" y="4.00" width="1.6" height="1.4" fill="#fff" opacity="0.55"/><rect x="7.20" y="4.00" width="1.6" height="1.4" fill="#fff" opacity="0.55"/><rect x="1.60" y="6.40" width="1.6" height="1.4" fill="#fff" opacity="0.55"/><rect x="4.40" y="6.40" width="1.6" height="1.4" fill="#fff" opacity="0.55"/><rect x="7.20" y="6.40" width="1.6" height="1.4" fill="#fff" opacity="0.55"/><rect x="1.60" y="8.80" width="1.6" height="1.4" fill="#fff" opacity="0.55"/><rect x="4.40" y="8.80" width="1.6" height="1.4" fill="#fff" opacity="0.55"/><rect x="7.20" y="8.80" width="1.6" height="1.4" fill="#fff" opacity="0.55"/><rect x="3.8" y="11.2" width="3.4" height="1.6" fill="#fff"/></svg>
<svg class="i" style="left:68.60px;top:350.10px;" width="8.80" height="8.80" viewBox="0 0 10 10"><circle cx="5" cy="5" r="4.6" fill="#21a55a" stroke="#fff" stroke-width="0.9"/><path d="M2.7 5.1 L4.3 6.6 L7.4 3.5" fill="none" stroke="#fff" stroke-width="1.3"/></svg>
<div class="t" style="top:344.70px;font-size:12.2px;line-height:15.25px;color:#333333;letter-spacing:-0.283px;left:80.60px;">alkaid</div>
<svg class="i" style="left:887.60px;top:345.60px;" width="12.60" height="11.60" viewBox="0 0 13 12"><path d="M9.6 7.2 V11 H1 V2.6 H5.2" fill="none" stroke="#2a62ad" stroke-width="1.2"/><path d="M5 7.2 L11 1.4" stroke="#2a62ad" stroke-width="1.4"/><path d="M7.6 0.4 H12.6 V5.4 Z" fill="#2a62ad"/></svg>
<svg class="i" style="left:75.00px;top:378.90px;" width="11.60" height="11.60" viewBox="0 0 13 13"><path d="M6.5 0.5 L12.5 2.8 V9.8 L6.5 12.5 L0.5 9.8 V2.8 Z" fill="#d4d4d4"/><path d="M1.6 3.2 L6.5 5.2 L11.4 3.2 L6.5 1.5 Z" fill="#f4f4f4"/><path d="M6.5 5.2 V12" stroke="#f4f4f4" stroke-width="0.9"/></svg>
<div class="t" style="top:378.20px;font-size:12.2px;line-height:15.25px;color:#333333;letter-spacing:-0.319px;left:97.80px;">171 (dubhe)</div>
<svg class="i" style="left:813.00px;top:379.40px;" width="10.60" height="11.40" viewBox="0 0 12 13"><path d="M3.3 3.3 A4.8 4.8 0 1 0 8.7 3.3" fill="none" stroke="#8f8f8f" stroke-width="1.6" stroke-linecap="round"/><path d="M6 1 V6.4" stroke="#8f8f8f" stroke-width="1.6" stroke-linecap="round"/></svg>
<svg class="i" style="left:838.20px;top:379.90px;" width="10.00" height="10.60" viewBox="0 0 10 11"><path d="M0.5 0.3 L9.8 5.5 L0.5 10.7 Z" fill="#1fa157"/></svg>
<svg class="i" style="left:862.80px;top:379.30px;" width="12.00" height="11.20" viewBox="0 0 13 12"><path d="M0.6 7.4 L12.4 0.6 L10.8 11.0 L7 8.6 Z" fill="none" stroke="#2a62ad" stroke-width="1.1" stroke-linejoin="round"/><path d="M12.4 0.6 L5 8 L4.2 11.4 L7 8.6 Z" fill="#2a62ad"/><path d="M0.6 7.4 L5 8" stroke="#2a62ad" stroke-width="1.1"/></svg>
<svg class="i" style="left:887.60px;top:379.10px;" width="12.60" height="11.60" viewBox="0 0 13 12"><path d="M9.6 7.2 V11 H1 V2.6 H5.2" fill="none" stroke="#2a62ad" stroke-width="1.2"/><path d="M5 7.2 L11 1.4" stroke="#2a62ad" stroke-width="1.4"/><path d="M7.6 0.4 H12.6 V5.4 Z" fill="#2a62ad"/></svg>
<svg class="i" style="left:75.00px;top:412.40px;" width="11.60" height="11.60" viewBox="0 0 13 13"><path d="M6.5 0.5 L12.5 2.8 V9.8 L6.5 12.5 L0.5 9.8 V2.8 Z" fill="#161616"/><path d="M1.6 3.2 L6.5 5.2 L11.4 3.2 L6.5 1.5 Z" fill="#fff"/><path d="M6.5 5.2 V12" stroke="#fff" stroke-width="0.9"/></svg>
<svg class="i" style="left:85.20px;top:416.60px;" width="6.60" height="7.60" viewBox="0 0 10 11"><path d="M0.5 0.3 L9.8 5.5 L0.5 10.7 Z" fill="#1fa157"/></svg>
<div class="t" style="top:411.70px;font-size:12.2px;line-height:15.25px;color:#333333;letter-spacing:-0.279px;left:97.80px;">245 (algol)</div>
<svg class="i" style="left:813.00px;top:412.90px;" width="10.60" height="11.40" viewBox="0 0 12 13"><path d="M3.3 3.3 A4.8 4.8 0 1 0 8.7 3.3" fill="none" stroke="#c8102e" stroke-width="1.6" stroke-linecap="round"/><path d="M6 1 V6.4" stroke="#c8102e" stroke-width="1.6" stroke-linecap="round"/></svg>
<svg class="i" style="left:838.20px;top:413.40px;" width="10.00" height="10.60" viewBox="0 0 10 11"><path d="M0.5 0.3 L9.8 5.5 L0.5 10.7 Z" fill="#8f8f8f"/></svg>
<svg class="i" style="left:862.80px;top:412.80px;" width="12.00" height="11.20" viewBox="0 0 13 12"><path d="M0.6 7.4 L12.4 0.6 L10.8 11.0 L7 8.6 Z" fill="none" stroke="#2a62ad" stroke-width="1.1" stroke-linejoin="round"/><path d="M12.4 0.6 L5 8 L4.2 11.4 L7 8.6 Z" fill="#2a62ad"/><path d="M0.6 7.4 L5 8" stroke="#2a62ad" stroke-width="1.1"/></svg>
<svg class="i" style="left:887.60px;top:412.60px;" width="12.60" height="11.60" viewBox="0 0 13 12"><path d="M9.6 7.2 V11 H1 V2.6 H5.2" fill="none" stroke="#2a62ad" stroke-width="1.2"/><path d="M5 7.2 L11 1.4" stroke="#2a62ad" stroke-width="1.4"/><path d="M7.6 0.4 H12.6 V5.4 Z" fill="#2a62ad"/></svg>
<svg class="i" style="left:75.00px;top:445.90px;" width="11.60" height="11.60" viewBox="0 0 13 13"><path d="M6.5 0.5 L12.5 2.8 V9.8 L6.5 12.5 L0.5 9.8 V2.8 Z" fill="#161616"/><path d="M1.6 3.2 L6.5 5.2 L11.4 3.2 L6.5 1.5 Z" fill="#fff"/><path d="M6.5 5.2 V12" stroke="#fff" stroke-width="0.9"/></svg>
<svg class="i" style="left:85.20px;top:450.10px;" width="6.60" height="7.60" viewBox="0 0 10 11"><path d="M0.5 0.3 L9.8 5.5 L0.5 10.7 Z" fill="#1fa157"/></svg>
<div class="t" style="top:445.20px;font-size:12.2px;line-height:15.25px;color:#333333;letter-spacing:-0.292px;left:97.80px;">247 (spica)</div>
<svg class="i" style="left:813.00px;top:446.40px;" width="10.60" height="11.40" viewBox="0 0 12 13"><path d="M3.3 3.3 A4.8 4.8 0 1 0 8.7 3.3" fill="none" stroke="#c8102e" stroke-width="1.6" stroke-linecap="round"/><path d="M6 1 V6.4" stroke="#c8102e" stroke-width="1.6" stroke-linecap="round"/></svg>
<svg class="i" style="left:838.20px;top:446.90px;" width="10.00" height="10.60" viewBox="0 0 10 11"><path d="M0.5 0.3 L9.8 5.5 L0.5 10.7 Z" fill="#8f8f8f"/></svg>
<svg class="i" style="left:862.80px;top:446.30px;" width="12.00" height="11.20" viewBox="0 0 13 12"><path d="M0.6 7.4 L12.4 0.6 L10.8 11.0 L7 8.6 Z" fill="none" stroke="#2a62ad" stroke-width="1.1" stroke-linejoin="round"/><path d="M12.4 0.6 L5 8 L4.2 11.4 L7 8.6 Z" fill="#2a62ad"/><path d="M0.6 7.4 L5 8" stroke="#2a62ad" stroke-width="1.1"/></svg>
<svg class="i" style="left:887.60px;top:446.10px;" width="12.60" height="11.60" viewBox="0 0 13 12"><path d="M9.6 7.2 V11 H1 V2.6 H5.2" fill="none" stroke="#2a62ad" stroke-width="1.2"/><path d="M5 7.2 L11 1.4" stroke="#2a62ad" stroke-width="1.4"/><path d="M7.6 0.4 H12.6 V5.4 Z" fill="#2a62ad"/></svg>
<svg class="i" style="left:75.00px;top:479.40px;" width="11.60" height="11.60" viewBox="0 0 13 13"><path d="M6.5 0.5 L12.5 2.8 V9.8 L6.5 12.5 L0.5 9.8 V2.8 Z" fill="#d4d4d4"/><path d="M1.6 3.2 L6.5 5.2 L11.4 3.2 L6.5 1.5 Z" fill="#f4f4f4"/><path d="M6.5 5.2 V12" stroke="#f4f4f4" stroke-width="0.9"/></svg>
<div class="t" style="top:478.70px;font-size:12.2px;line-height:15.25px;color:#333333;letter-spacing:-0.292px;left:97.80px;">248 (rasalas)</div>
<svg class="i" style="left:813.00px;top:479.90px;" width="10.60" height="11.40" viewBox="0 0 12 13"><path d="M3.3 3.3 A4.8 4.8 0 1 0 8.7 3.3" fill="none" stroke="#8f8f8f" stroke-width="1.6" stroke-linecap="round"/><path d="M6 1 V6.4" stroke="#8f8f8f" stroke-width="1.6" stroke-linecap="round"/></svg>
<svg class="i" style="left:838.20px;top:480.40px;" width="10.00" height="10.60" viewBox="0 0 10 11"><path d="M0.5 0.3 L9.8 5.5 L0.5 10.7 Z" fill="#1fa157"/></svg>
<svg class="i" style="left:862.80px;top:479.80px;" width="12.00" height="11.20" viewBox="0 0 13 12"><path d="M0.6 7.4 L12.4 0.6 L10.8 11.0 L7 8.6 Z" fill="none" stroke="#2a62ad" stroke-width="1.1" stroke-linejoin="round"/><path d="M12.4 0.6 L5 8 L4.2 11.4 L7 8.6 Z" fill="#2a62ad"/><path d="M0.6 7.4 L5 8" stroke="#2a62ad" stroke-width="1.1"/></svg>
<svg class="i" style="left:887.60px;top:479.60px;" width="12.60" height="11.60" viewBox="0 0 13 12"><path d="M9.6 7.2 V11 H1 V2.6 H5.2" fill="none" stroke="#2a62ad" stroke-width="1.2"/><path d="M5 7.2 L11 1.4" stroke="#2a62ad" stroke-width="1.4"/><path d="M7.6 0.4 H12.6 V5.4 Z" fill="#2a62ad"/></svg>
<svg class="i" style="left:75.00px;top:512.90px;" width="11.60" height="11.60" viewBox="0 0 13 13"><path d="M6.5 0.5 L12.5 2.8 V9.8 L6.5 12.5 L0.5 9.8 V2.8 Z" fill="#161616"/><path d="M1.6 3.2 L6.5 5.2 L11.4 3.2 L6.5 1.5 Z" fill="#fff"/><path d="M6.5 5.2 V12" stroke="#fff" stroke-width="0.9"/></svg>
<svg class="i" style="left:85.20px;top:517.10px;" width="6.60" height="7.60" viewBox="0 0 10 11"><path d="M0.5 0.3 L9.8 5.5 L0.5 10.7 Z" fill="#1fa157"/></svg>
<div class="t" style="top:512.20px;font-size:12.2px;line-height:15.25px;color:#333333;letter-spacing:-0.296px;left:97.80px;">249 (sadr)</div>
<svg class="i" style="left:813.00px;top:513.40px;" width="10.60" height="11.40" viewBox="0 0 12 13"><path d="M3.3 3.3 A4.8 4.8 0 1 0 8.7 3.3" fill="none" stroke="#c8102e" stroke-width="1.6" stroke-linecap="round"/><path d="M6 1 V6.4" stroke="#c8102e" stroke-width="1.6" stroke-linecap="round"/></svg>
<svg class="i" style="left:838.20px;top:513.90px;" width="10.00" height="10.60" viewBox="0 0 10 11"><path d="M0.5 0.3 L9.8 5.5 L0.5 10.7 Z" fill="#8f8f8f"/></svg>
<svg class="i" style="left:862.80px;top:513.30px;" width="12.00" height="11.20" viewBox="0 0 13 12"><path d="M0.6 7.4 L12.4 0.6 L10.8 11.0 L7 8.6 Z" fill="none" stroke="#2a62ad" stroke-width="1.1" stroke-linejoin="round"/><path d="M12.4 0.6 L5 8 L4.2 11.4 L7 8.6 Z" fill="#2a62ad"/><path d="M0.6 7.4 L5 8" stroke="#2a62ad" stroke-width="1.1"/></svg>
<svg class="i" style="left:887.60px;top:513.10px;" width="12.60" height="11.60" viewBox="0 0 13 12"><path d="M9.6 7.2 V11 H1 V2.6 H5.2" fill="none" stroke="#2a62ad" stroke-width="1.2"/><path d="M5 7.2 L11 1.4" stroke="#2a62ad" stroke-width="1.4"/><path d="M7.6 0.4 H12.6 V5.4 Z" fill="#2a62ad"/></svg>
<svg class="i" style="left:75.00px;top:546.40px;" width="11.60" height="11.60" viewBox="0 0 13 13"><path d="M6.5 0.5 L12.5 2.8 V9.8 L6.5 12.5 L0.5 9.8 V2.8 Z" fill="#161616"/><path d="M1.6 3.2 L6.5 5.2 L11.4 3.2 L6.5 1.5 Z" fill="#fff"/><path d="M6.5 5.2 V12" stroke="#fff" stroke-width="0.9"/></svg>
<svg class="i" style="left:85.20px;top:550.60px;" width="6.60" height="7.60" viewBox="0 0 10 11"><path d="M0.5 0.3 L9.8 5.5 L0.5 10.7 Z" fill="#1fa157"/></svg>
<div class="t" style="top:545.70px;font-size:12.2px;line-height:15.25px;color:#333333;letter-spacing:-0.281px;left:97.80px;">250 (electra)</div>
<svg class="i" style="left:813.00px;top:546.90px;" width="10.60" height="11.40" viewBox="0 0 12 13"><path d="M3.3 3.3 A4.8 4.8 0 1 0 8.7 3.3" fill="none" stroke="#c8102e" stroke-width="1.6" stroke-linecap="round"/><path d="M6 1 V6.4" stroke="#c8102e" stroke-width="1.6" stroke-linecap="round"/></svg>
<svg class="i" style="left:838.20px;top:547.40px;" width="10.00" height="10.60" viewBox="0 0 10 11"><path d="M0.5 0.3 L9.8 5.5 L0.5 10.7 Z" fill="#8f8f8f"/></svg>
<svg class="i" style="left:862.80px;top:546.80px;" width="12.00" height="11.20" viewBox="0 0 13 12"><path d="M0.6 7.4 L12.4 0.6 L10.8 11.0 L7 8.6 Z" fill="none" stroke="#2a62ad" stroke-width="1.1" stroke-linejoin="round"/><path d="M12.4 0.6 L5 8 L4.2 11.4 L7 8.6 Z" fill="#2a62ad"/><path d="M0.6 7.4 L5 8" stroke="#2a62ad" stroke-width="1.1"/></svg>
<svg class="i" style="left:887.60px;top:546.60px;" width="12.60" height="11.60" viewBox="0 0 13 12"><path d="M9.6 7.2 V11 H1 V2.6 H5.2" fill="none" stroke="#2a62ad" stroke-width="1.2"/><path d="M5 7.2 L11 1.4" stroke="#2a62ad" stroke-width="1.4"/><path d="M7.6 0.4 H12.6 V5.4 Z" fill="#2a62ad"/></svg>
<svg class="i" style="left:75.00px;top:579.90px;" width="11.60" height="11.60" viewBox="0 0 13 13"><path d="M6.5 0.5 L12.5 2.8 V9.8 L6.5 12.5 L0.5 9.8 V2.8 Z" fill="#161616"/><path d="M1.6 3.2 L6.5 5.2 L11.4 3.2 L6.5 1.5 Z" fill="#fff"/><path d="M6.5 5.2 V12" stroke="#fff" stroke-width="0.9"/></svg>
<svg class="i" style="left:85.20px;top:584.10px;" width="6.60" height="7.60" viewBox="0 0 10 11"><path d="M0.5 0.3 L9.8 5.5 L0.5 10.7 Z" fill="#1fa157"/></svg>
<div class="t" style="top:579.20px;font-size:12.2px;line-height:15.25px;color:#333333;letter-spacing:-0.306px;left:97.80px;">252 (aldebaran)</div>
<svg class="i" style="left:813.00px;top:580.40px;" width="10.60" height="11.40" viewBox="0 0 12 13"><path d="M3.3 3.3 A4.8 4.8 0 1 0 8.7 3.3" fill="none" stroke="#c8102e" stroke-width="1.6" stroke-linecap="round"/><path d="M6 1 V6.4" stroke="#c8102e" stroke-width="1.6" stroke-linecap="round"/></svg>
<svg class="i" style="left:838.20px;top:580.90px;" width="10.00" height="10.60" viewBox="0 0 10 11"><path d="M0.5 0.3 L9.8 5.5 L0.5 10.7 Z" fill="#8f8f8f"/></svg>
<svg class="i" style="left:862.80px;top:580.30px;" width="12.00" height="11.20" viewBox="0 0 13 12"><path d="M0.6 7.4 L12.4 0.6 L10.8 11.0 L7 8.6 Z" fill="none" stroke="#2a62ad" stroke-width="1.1" stroke-linejoin="round"/><path d="M12.4 0.6 L5 8 L4.2 11.4 L7 8.6 Z" fill="#2a62ad"/><path d="M0.6 7.4 L5 8" stroke="#2a62ad" stroke-width="1.1"/></svg>
<svg class="i" style="left:887.60px;top:580.10px;" width="12.60" height="11.60" viewBox="0 0 13 12"><path d="M9.6 7.2 V11 H1 V2.6 H5.2" fill="none" stroke="#2a62ad" stroke-width="1.2"/><path d="M5 7.2 L11 1.4" stroke="#2a62ad" stroke-width="1.4"/><path d="M7.6 0.4 H12.6 V5.4 Z" fill="#2a62ad"/></svg>
<svg class="i" style="left:75.00px;top:613.40px;" width="11.60" height="11.60" viewBox="0 0 13 13"><path d="M6.5 0.5 L12.5 2.8 V9.8 L6.5 12.5 L0.5 9.8 V2.8 Z" fill="#161616"/><path d="M1.6 3.2 L6.5 5.2 L11.4 3.2 L6.5 1.5 Z" fill="#fff"/><path d="M6.5 5.2 V12" stroke="#fff" stroke-width="0.9"/></svg>
<svg class="i" style="left:85.20px;top:617.60px;" width="6.60" height="7.60" viewBox="0 0 10 11"><path d="M0.5 0.3 L9.8 5.5 L0.5 10.7 Z" fill="#1fa157"/></svg>
<div class="t" style="top:612.70px;font-size:12.2px;line-height:15.25px;color:#333333;letter-spacing:-0.281px;left:97.80px;">253 (electra)</div>
<svg class="i" style="left:813.00px;top:613.90px;" width="10.60" height="11.40" viewBox="0 0 12 13"><path d="M3.3 3.3 A4.8 4.8 0 1 0 8.7 3.3" fill="none" stroke="#c8102e" stroke-width="1.6" stroke-linecap="round"/><path d="M6 1 V6.4" stroke="#c8102e" stroke-width="1.6" stroke-linecap="round"/></svg>
<svg class="i" style="left:838.20px;top:614.40px;" width="10.00" height="10.60" viewBox="0 0 10 11"><path d="M0.5 0.3 L9.8 5.5 L0.5 10.7 Z" fill="#8f8f8f"/></svg>
<svg class="i" style="left:862.80px;top:613.80px;" width="12.00" height="11.20" viewBox="0 0 13 12"><path d="M0.6 7.4 L12.4 0.6 L10.8 11.0 L7 8.6 Z" fill="none" stroke="#2a62ad" stroke-width="1.1" stroke-linejoin="round"/><path d="M12.4 0.6 L5 8 L4.2 11.4 L7 8.6 Z" fill="#2a62ad"/><path d="M0.6 7.4 L5 8" stroke="#2a62ad" stroke-width="1.1"/></svg>
<svg class="i" style="left:887.60px;top:613.60px;" width="12.60" height="11.60" viewBox="0 0 13 12"><path d="M9.6 7.2 V11 H1 V2.6 H5.2" fill="none" stroke="#2a62ad" stroke-width="1.2"/><path d="M5 7.2 L11 1.4" stroke="#2a62ad" stroke-width="1.4"/><path d="M7.6 0.4 H12.6 V5.4 Z" fill="#2a62ad"/></svg>
<svg class="i" style="left:75.00px;top:646.90px;" width="11.60" height="11.60" viewBox="0 0 13 13"><path d="M6.5 0.5 L12.5 2.8 V9.8 L6.5 12.5 L0.5 9.8 V2.8 Z" fill="#161616"/><path d="M1.6 3.2 L6.5 5.2 L11.4 3.2 L6.5 1.5 Z" fill="#fff"/><path d="M6.5 5.2 V12" stroke="#fff" stroke-width="0.9"/></svg>
<svg class="i" style="left:85.20px;top:651.10px;" width="6.60" height="7.60" viewBox="0 0 10 11"><path d="M0.5 0.3 L9.8 5.5 L0.5 10.7 Z" fill="#1fa157"/></svg>
<div class="t" style="top:646.20px;font-size:12.2px;line-height:15.25px;color:#333333;letter-spacing:-0.299px;left:97.80px;">254 (acrux)</div>
<svg class="i" style="left:813.00px;top:647.40px;" width="10.60" height="11.40" viewBox="0 0 12 13"><path d="M3.3 3.3 A4.8 4.8 0 1 0 8.7 3.3" fill="none" stroke="#c8102e" stroke-width="1.6" stroke-linecap="round"/><path d="M6 1 V6.4" stroke="#c8102e" stroke-width="1.6" stroke-linecap="round"/></svg>
<svg class="i" style="left:838.20px;top:647.90px;" width="10.00" height="10.60" viewBox="0 0 10 11"><path d="M0.5 0.3 L9.8 5.5 L0.5 10.7 Z" fill="#8f8f8f"/></svg>
<svg class="i" style="left:862.80px;top:647.30px;" width="12.00" height="11.20" viewBox="0 0 13 12"><path d="M0.6 7.4 L12.4 0.6 L10.8 11.0 L7 8.6 Z" fill="none" stroke="#2a62ad" stroke-width="1.1" stroke-linejoin="round"/><path d="M12.4 0.6 L5 8 L4.2 11.4 L7 8.6 Z" fill="#2a62ad"/><path d="M0.6 7.4 L5 8" stroke="#2a62ad" stroke-width="1.1"/></svg>
<svg class="i" style="left:887.60px;top:647.10px;" width="12.60" height="11.60" viewBox="0 0 13 12"><path d="M9.6 7.2 V11 H1 V2.6 H5.2" fill="none" stroke="#2a62ad" stroke-width="1.2"/><path d="M5 7.2 L11 1.4" stroke="#2a62ad" stroke-width="1.4"/><path d="M7.6 0.4 H12.6 V5.4 Z" fill="#2a62ad"/></svg>
<svg class="i" style="left:75.00px;top:680.40px;" width="11.60" height="11.60" viewBox="0 0 13 13"><path d="M6.5 0.5 L12.5 2.8 V9.8 L6.5 12.5 L0.5 9.8 V2.8 Z" fill="#161616"/><path d="M1.6 3.2 L6.5 5.2 L11.4 3.2 L6.5 1.5 Z" fill="#fff"/><path d="M6.5 5.2 V12" stroke="#fff" stroke-width="0.9"/></svg>
<svg class="i" style="left:85.20px;top:684.60px;" width="6.60" height="7.60" viewBox="0 0 10 11"><path d="M0.5 0.3 L9.8 5.5 L0.5 10.7 Z" fill="#1fa157"/></svg>
<div class="t" style="top:679.70px;font-size:12.2px;line-height:15.25px;color:#333333;letter-spacing:-0.305px;left:97.80px;">255 (hadar)</div>
<svg class="i" style="left:813.00px;top:680.90px;" width="10.60" height="11.40" viewBox="0 0 12 13"><path d="M3.3 3.3 A4.8 4.8 0 1 0 8.7 3.3" fill="none" stroke="#c8102e" stroke-width="1.6" stroke-linecap="round"/><path d="M6 1 V6.4" stroke="#c8102e" stroke-width="1.6" stroke-linecap="round"/></svg>
<svg class="i" style="left:838.20px;top:681.40px;" width="10.00" height="10.60" viewBox="0 0 10 11"><path d="M0.5 0.3 L9.8 5.5 L0.5 10.7 Z" fill="#8f8f8f"/></svg>
<svg class="i" style="left:862.80px;top:680.80px;" width="12.00" height="11.20" viewBox="0 0 13 12"><path d="M0.6 7.4 L12.4 0.6 L10.8 11.0 L7 8.6 Z" fill="none" stroke="#2a62ad" stroke-width="1.1" stroke-linejoin="round"/><path d="M12.4 0.6 L5 8 L4.2 11.4 L7 8.6 Z" fill="#2a62ad"/><path d="M0.6 7.4 L5 8" stroke="#2a62ad" stroke-width="1.1"/></svg>
<svg class="i" style="left:887.60px;top:680.60px;" width="12.60" height="11.60" viewBox="0 0 13 12"><path d="M9.6 7.2 V11 H1 V2.6 H5.2" fill="none" stroke="#2a62ad" stroke-width="1.2"/><path d="M5 7.2 L11 1.4" stroke="#2a62ad" stroke-width="1.4"/><path d="M7.6 0.4 H12.6 V5.4 Z" fill="#2a62ad"/></svg>
</div>
<div class="r" style="left:1195.00px;top:61.00px;width:932.00px;height:1128.50px;background:#ffffff;border:1px solid #e4e4e4;box-shadow:0 1px 2px rgba(0,0,0,0.18);"></div>
<svg class="i" style="left:1204.90px;top:72.00px;" width="12.90" height="16.00" viewBox="0 0 11 14"><rect x="0" y="0" width="11" height="14" rx="0.8" fill="#2a65ab"/><rect x="1.60" y="1.60" width="1.6" height="1.4" fill="#fff" opacity="0.55"/><rect x="4.40" y="1.60" width="1.6" height="1.4" fill="#fff" opacity="0.55"/><rect x="7.20" y="1.60" width="1.6" height="1.4" fill="#fff" opacity="0.55"/><rect x="1.60" y="4.00" width="1.6" height="1.4" fill="#fff" opacity="0.55"/><rect x="4.40" y="4.00" width="1.6" height="1.4" fill="#fff" opacity="0.55"/><rect x="7.20" y="4.00" width="1.6" height="1.4" fill="#fff" opacity="0.55"/><rect x="1.60" y="6.40" width="1.6" height="1.4" fill="#fff" opacity="0.55"/><rect x="4.40" y="6.40" width="1.6" height="1.4" fill="#fff" opacity="0.55"/><rect x="7.20" y="6.40" width="1.6" height="1.4" fill="#fff" opacity="0.55"/><rect x="1.60" y="8.80" width="1.6" height="1.4" fill="#fff" opacity="0.55"/><rect x="4.40" y="8.80" width="1.6" height="1.4" fill="#fff" opacity="0.55"/><rect x="7.20" y="8.80" width="1.6" height="1.4" fill="#fff" opacity="0.55"/><rect x="3.8" y="11.2" width="3.4" height="1.6" fill="#fff"/></svg>
<div class="t" style="top:70.33px;font-size:17px;line-height:21.25px;color:#2a65ab;letter-spacing:-0.417px;left:1227.70px;">Node 'nunki'</div>
<div class="r" style="left:1196.00px;top:135.20px;width:930.00px;height:1.20px;background:#dadada;"></div>
<svg class="i" style="left:1212.20px;top:111.60px;" width="12.60" height="11.00" viewBox="0 0 16 14"><path d="M1.2 12.2 A7.4 7.4 0 1 1 14.8 12.2 Z" fill="#2a65ab"/><circle cx="3.3" cy="9.2" r="0.85" fill="#fff"/><circle cx="4.7" cy="5.9" r="0.85" fill="#fff"/><circle cx="8" cy="4.5" r="0.85" fill="#fff"/><circle cx="11.3" cy="5.9" r="0.85" fill="#fff"/><circle cx="12.7" cy="9.2" r="0.85" fill="#fff"/><path d="M7.2 10.6 L10.0 5.9 L8.9 11.0 Z" fill="#fff"/><circle cx="8" cy="10.8" r="1.3" fill="#fff"/></svg>
<div class="t" style="top:110.10px;font-size:12.2px;line-height:15.25px;color:#2a65ab;letter-spacing:-0.479px;left:1230.60px;">Overview</div>
<div class="r" style="left:1213.00px;top:132.60px;width:64.50px;height:3.20px;background:#1d58a6;border-radius:2px 2px 0 0;"></div>
<svg class="i" style="left:1310.50px;top:111.60px;" width="10.80" height="10.80" viewBox="0 0 13 13"><path d="M1.2 1.2 H11.8 V8.2 L8.2 11.8 H1.2 Z" fill="none" stroke="#2b2b2b" stroke-width="1.4" stroke-linejoin="round"/><path d="M11.8 8.2 H8.2 V11.8" fill="none" stroke="#2b2b2b" stroke-width="1.3"/></svg>
<div class="t" style="top:110.10px;font-size:12.2px;line-height:15.25px;color:#333333;letter-spacing:-0.376px;left:1327.30px;">Notes</div>
<svg class="i" style="left:1390.40px;top:111.00px;" width="11.40" height="11.40" viewBox="0 0 14 14"><path d="M11.8 5.2 A5 5 0 0 0 2.4 5.0" fill="none" stroke="#222" stroke-width="1.9"/><path d="M13 1.6 V6.4 H8.4 Z" fill="#222"/><path d="M2.2 8.8 A5 5 0 0 0 11.6 9.0" fill="none" stroke="#222" stroke-width="1.9"/><path d="M1 12.4 V7.6 H5.6 Z" fill="#222"/></svg>
<div class="t" style="top:110.10px;font-size:12.2px;line-height:15.25px;color:#333333;letter-spacing:-0.420px;left:1407.20px;">Updates</div>
<svg class="i" style="left:1483.30px;top:113.20px;" width="12.00" height="7.80" viewBox="0 0 14 9"><path d="M0.8 0.8 L4.6 4.2 L0.8 7.6" fill="none" stroke="#2b2b2b" stroke-width="1.2"/><path d="M6.4 8.2 H13.6" stroke="#2b2b2b" stroke-width="1.2"/></svg>
<div class="t" style="top:110.10px;font-size:12.2px;line-height:15.25px;color:#333333;letter-spacing:-0.427px;left:1500.50px;">Shell</div>
<svg class="i" style="left:1213.50px;top:156.20px;" width="13.60" height="13.60" viewBox="0 0 14 14"><rect x="2" y="2" width="10" height="10" fill="none" stroke="#1c1c1c" stroke-width="1.5"/><rect x="4.3" y="4.3" width="5.4" height="5.4" fill="#1c1c1c"/><rect x="2.70" y="0" width="1" height="2" fill="#1c1c1c"/><rect x="2.70" y="12" width="1" height="2" fill="#1c1c1c"/><rect x="0" y="2.70" width="2" height="1" fill="#1c1c1c"/><rect x="12" y="2.70" width="2" height="1" fill="#1c1c1c"/><rect x="5.25" y="0" width="1" height="2" fill="#1c1c1c"/><rect x="5.25" y="12" width="1" height="2" fill="#1c1c1c"/><rect x="0" y="5.25" width="2" height="1" fill="#1c1c1c"/><rect x="12" y="5.25" width="2" height="1" fill="#1c1c1c"/><rect x="7.80" y="0" width="1" height="2" fill="#1c1c1c"/><rect x="7.80" y="12" width="1" height="2" fill="#1c1c1c"/><rect x="0" y="7.80" width="2" height="1" fill="#1c1c1c"/><rect x="12" y="7.80" width="2" height="1" fill="#1c1c1c"/><rect x="10.35" y="0" width="1" height="2" fill="#1c1c1c"/><rect x="10.35" y="12" width="1" height="2" fill="#1c1c1c"/><rect x="0" y="10.35" width="2" height="1" fill="#1c1c1c"/><rect x="12" y="10.35" width="2" height="1" fill="#1c1c1c"/></svg>
<div class="t" style="top:156.90px;font-size:12.2px;line-height:15.25px;color:#333333;letter-spacing:-0.704px;left:1236.60px;">CPU Usage</div>
<div class="t" style="top:156.90px;font-size:12.2px;line-height:15.25px;color:#333333;letter-spacing:-0.361px;right:498.64px;">0.00% of 32 CPU(s)</div>
<div class="r" style="left:1213.00px;top:173.90px;width:432.00px;height:3.10px;background:#eeeeee;border-radius:2px;"></div>
<svg class="i" style="left:1213.50px;top:213.20px;" width="13.60" height="7.80" viewBox="0 0 14 8"><rect x="0.7" y="0.7" width="12.6" height="5.6" fill="none" stroke="#1c1c1c" stroke-width="1.4"/><rect x="2.4" y="2.4" width="2.2" height="2.2" fill="#1c1c1c"/><rect x="5.9" y="2.4" width="2.2" height="2.2" fill="#1c1c1c"/><rect x="9.4" y="2.4" width="2.2" height="2.2" fill="#1c1c1c"/><path d="M1 7.4 H13" stroke="#1c1c1c" stroke-width="1.2" stroke-dasharray="1.3 1.1"/></svg>
<div class="t" style="top:211.40px;font-size:12.2px;line-height:15.25px;color:#333333;letter-spacing:-0.563px;left:1236.60px;">RAM Usage</div>
<div class="t" style="top:211.40px;font-size:12.2px;line-height:15.25px;color:#333333;letter-spacing:-0.316px;right:498.68px;">15.09% (18.966 GiB of 125.658 GiB)</div>
<div class="r" style="left:1213.00px;top:228.60px;width:432.00px;height:3.10px;background:#eeeeee;border-radius:2px;"></div>
<div class="r" style="left:1213.00px;top:228.60px;width:65.19px;height:3.10px;background:#1d58a6;border-radius:2px;"></div>
<svg class="i" style="left:1214.60px;top:241.60px;" width="11.60" height="8.80" viewBox="0 0 14 11"><path d="M3 1 H11 L13.3 6 V10 H0.7 V6 Z" fill="none" stroke="#2b2b2b" stroke-width="1.3" stroke-linejoin="round"/><path d="M0.7 6 H13.3" stroke="#2b2b2b" stroke-width="1.3"/></svg>
<div class="t" style="top:238.50px;font-size:12.2px;line-height:15.25px;color:#333333;letter-spacing:-0.240px;left:1236.60px;">HD space (root)</div>
<div class="t" style="top:238.50px;font-size:12.2px;line-height:15.25px;color:#333333;letter-spacing:-0.345px;right:498.65px;">5.38% (21.569 GB of 400.561 GB)</div>
<div class="r" style="left:1213.00px;top:256.30px;width:432.00px;height:3.10px;background:#eeeeee;border-radius:2px;"></div>
<div class="r" style="left:1213.00px;top:256.30px;width:23.24px;height:3.10px;background:#1d58a6;border-radius:2px;"></div>
<svg class="i" style="left:1680.60px;top:157.80px;" width="10.60" height="10.60" viewBox="0 0 12 12"><circle cx="6" cy="6" r="4.9" fill="none" stroke="#2b2b2b" stroke-width="1.4"/><path d="M6 3 V6.3 H8.3" fill="none" stroke="#2b2b2b" stroke-width="1.3"/></svg>
<div class="t" style="top:155.90px;font-size:12.2px;line-height:15.25px;color:#333333;letter-spacing:-0.372px;left:1702.30px;">IO delay</div>
<div class="t" style="top:155.90px;font-size:12.2px;line-height:15.25px;color:#333333;letter-spacing:-0.363px;right:33.24px;">0.00 %</div>
<div class="r" style="left:1680.40px;top:172.80px;width:430.00px;height:3.10px;background:#eeeeee;border-radius:2px;"></div>
<svg class="i" style="left:1680.20px;top:216.90px;" width="11.80" height="9.20" viewBox="0 0 14 12"><rect x="0" y="0" width="14" height="3.4" fill="#1e1e1e"/><rect x="1.5" y="1.1" width="6.5" height="1.2" fill="#fff"/><rect x="10.6" y="0.9" width="1.6" height="1.6" fill="#fff"/><rect x="0" y="4.3" width="14" height="3.4" fill="#1e1e1e"/><rect x="1.5" y="5.4" width="6.5" height="1.2" fill="#fff"/><rect x="10.6" y="5.2" width="1.6" height="1.6" fill="#fff"/><rect x="0" y="8.6" width="14" height="3.4" fill="#1e1e1e"/><rect x="1.5" y="9.7" width="6.5" height="1.2" fill="#fff"/><rect x="10.6" y="9.5" width="1.6" height="1.6" fill="#fff"/></svg>
<div class="t" style="top:214.60px;font-size:12.2px;line-height:15.25px;color:#333333;letter-spacing:-0.359px;left:1702.30px;">Load Average</div>
<div class="t" style="top:214.60px;font-size:12.2px;line-height:15.25px;color:#333333;letter-spacing:-0.320px;right:33.28px;">2.55 2.30 2.19</div>
<svg class="i" style="left:1680.00px;top:244.60px;" width="11.80" height="11.80" viewBox="0 0 14 14"><path d="M11.8 5.2 A5 5 0 0 0 2.4 5.0" fill="none" stroke="#1e1e1e" stroke-width="1.7"/><path d="M13 1.6 V6.4 H8.4 Z" fill="#1e1e1e"/><path d="M2.2 8.8 A5 5 0 0 0 11.6 9.0" fill="none" stroke="#1e1e1e" stroke-width="1.7"/><path d="M1 12.4 V7.6 H5.6 Z" fill="#1e1e1e"/></svg>
<div class="t" style="top:243.00px;font-size:12.2px;line-height:15.25px;color:#333333;letter-spacing:-0.471px;left:1702.30px;">SWAP usage</div>
<div class="t" style="top:243.00px;font-size:12.2px;line-height:15.25px;color:#333333;letter-spacing:-0.389px;right:33.21px;">N/A</div>
<div class="t" style="top:292.20px;font-size:12.2px;line-height:15.25px;color:#333333;letter-spacing:-0.382px;left:1213.00px;">CPU(s)</div>
<div class="t" style="top:292.20px;font-size:12.2px;line-height:15.25px;color:#333333;letter-spacing:-0.422px;right:33.18px;">32 x AMD EPYC 7302 16-Core Processor (1 Socket)</div>
<div class="t" style="top:312.20px;font-size:12.2px;line-height:15.25px;color:#333333;letter-spacing:-0.334px;left:1213.00px;">Version</div>
<div class="t" style="top:312.20px;font-size:12.2px;line-height:15.25px;color:#333333;letter-spacing:-0.203px;right:33.40px;">pve-manager/8.4.14/b502d23c55afcba1</div>
<div class="t" style="top:332.10px;font-size:12.2px;line-height:15.25px;color:#333333;letter-spacing:-0.325px;left:1213.00px;">Kernel Version</div>
<div class="t" style="top:332.10px;font-size:12.2px;line-height:15.25px;color:#333333;letter-spacing:-0.213px;right:33.39px;">Linux 6.8.12-17-pve (2025-11-21T11:16Z)</div>
<div class="r" style="left:1213.20px;top:369.80px;width:897.50px;height:1.10px;background:#d9d9d9;"></div>
<div class="r" style="left:1892.20px;top:383.40px;width:83.50px;height:26.60px;background:#ffffff;border:1px solid #cfcfcf;border-radius:2px;"></div>
<div class="t" style="top:389.60px;font-size:12.2px;line-height:15.25px;color:#333333;letter-spacing:-0.444px;left:1901.40px;">Week</div>
<svg class="i" style="left:1959.60px;top:394.40px;" width="7.40" height="4.40" viewBox="0 0 10 6"><path d="M1 1 L5 5 L9 1" fill="none" stroke="#333" stroke-width="1.3"/></svg>
<div class="r" style="left:1984.00px;top:384.20px;width:68.50px;height:25.00px;background:#eeeeee;border-radius:3px 0 0 3px;"></div>
<div class="t" style="top:389.60px;font-size:12.2px;line-height:15.25px;color:#333333;letter-spacing:-0.254px;left:1992.90px;">Maximum</div>
<div class="r" style="left:2052.30px;top:384.20px;width:58.40px;height:25.00px;background:#2e6fbc;border-radius:0 3px 3px 0;"></div>
<div class="t" style="top:389.60px;font-size:12.2px;line-height:15.25px;color:#ffffff;letter-spacing:-0.604px;left:2061.00px;">Average</div>
<div class="r" style="left:1212.60px;top:431.80px;width:898.70px;height:265.00px;background:#ffffff;border:1px solid #f0f0f0;box-shadow:0 1px 1.5px rgba(0,0,0,0.2);"></div>
<div class="t" style="top:440.65px;font-size:17.5px;line-height:21.875px;color:#2a65ab;letter-spacing:-1.332px;left:1221.30px;">CPU Usage</div>
<svg class="i" style="left:1213px;top:432px" width="898" height="264" viewBox="1213 432 898 264"><path d="M1264 485.80 H2103.4" stroke="#eaeaea" stroke-width="1"/><path d="M1264 506.66 H2103.4" stroke="#eaeaea" stroke-width="1"/><path d="M1264 527.52 H2103.4" stroke="#eaeaea" stroke-width="1"/><path d="M1264 548.39 H2103.4" stroke="#eaeaea" stroke-width="1"/><path d="M1264 569.25 H2103.4" stroke="#eaeaea" stroke-width="1"/><path d="M1264 590.11 H2103.4" stroke="#eaeaea" stroke-width="1"/><path d="M1264 610.98 H2103.4" stroke="#eaeaea" stroke-width="1"/><path d="M1264 631.84 H2103.4" stroke="#eaeaea" stroke-width="1"/><path d="M1264 652.70 H2103.4" stroke="#eaeaea" stroke-width="1"/><path d="M1324.40 476.2 V652.7" stroke="#eaeaea" stroke-width="1"/><path d="M1441.90 476.2 V652.7" stroke="#eaeaea" stroke-width="1"/><path d="M1559.10 476.2 V652.7" stroke="#eaeaea" stroke-width="1"/><path d="M1676.50 476.2 V652.7" stroke="#eaeaea" stroke-width="1"/><path d="M1793.80 476.2 V652.7" stroke="#eaeaea" stroke-width="1"/><path d="M1911.30 476.2 V652.7" stroke="#eaeaea" stroke-width="1"/><path d="M2028.50 476.2 V652.7" stroke="#eaeaea" stroke-width="1"/><path d="M1272.12 532.82 L1274.74 526.15 L1278.51 532.24 L1282.28 533.40 L1290.12 547.33 L1292.15 573.45 L1298.82 589.41 L1303.76 582.15 L1307.53 589.41 L1313.33 589.41 L1319.14 594.63 L1323.49 591.73 L1328.71 593.76 L1333.64 588.83 L1336.55 591.73 L1343.80 587.38 L1348.15 590.28 L1355.41 588.83 L1359.76 579.25 L1364.11 556.04 L1367.89 535.72 L1372.82 524.11 L1377.17 511.64 L1380.08 524.11 L1382.98 524.11 L1388.78 499.45 L1394.59 527.02 L1398.94 536.39 L1403.29 547.33 L1410.55 570.55 L1416.35 588.54 L1422.15 583.02 L1426.51 584.17 L1430.86 585.06 L1435.21 595.21 L1439.56 595.21 L1443.92 591.44 L1451.17 588.83 L1455.53 590.86 L1461.33 584.47 L1467.13 587.96 L1472.94 587.96 L1477.29 576.35 L1480.19 560.39 L1487.45 529.92 L1491.80 517.73 L1496.15 516.86 L1501.96 529.92 L1509.21 516.86 L1512.11 527.60 L1516.47 527.02 L1520.82 547.33 L1525.17 573.45 L1530.98 577.80 L1535.33 587.96 L1541.13 586.51 L1545.48 590.86 L1549.84 593.66 L1554.19 597.24 L1559.99 593.76 L1567.25 593.76 L1573.05 596.08 L1580.31 590.86 L1584.66 596.08 L1591.92 598.11 L1599.17 594.63 L1606.42 589.70 L1613.68 592.31 L1619.48 591.17 L1625.29 589.41 L1629.64 590.51 L1633.99 590.86 L1638.35 589.27 L1642.70 590.28 L1648.50 589.11 L1654.31 590.86 L1660.11 592.31 L1665.91 591.73 L1669.98 593.76 L1665.80 591.73 L1671.61 595.21 L1677.41 592.75 L1683.22 591.73 L1687.57 592.38 L1691.92 594.63 L1697.72 596.41 L1703.53 595.21 L1709.33 599.56 L1713.69 596.57 L1718.04 593.76 L1722.39 593.75 L1726.74 591.73 L1731.10 591.95 L1735.45 592.31 L1739.80 596.66 L1744.16 590.86 L1749.96 593.16 L1755.76 594.63 L1760.12 592.86 L1764.47 593.59 L1768.82 593.56 L1773.17 591.73 L1778.98 593.98 L1784.78 596.08 L1790.59 598.98 L1797.84 591.73 L1802.19 591.68 L1806.55 590.70 L1810.90 589.41 L1818.15 595.21 L1821.06 587.96 L1826.86 590.86 L1834.11 553.13 L1841.37 521.21 L1845.72 513.96 L1850.08 516.86 L1854.43 509.61 L1861.68 495.10 L1866.04 516.86 L1868.94 516.86 L1874.74 541.53 L1879.09 570.55 L1884.90 579.25 L1892.15 587.96 L1899.41 585.06 L1906.66 590.86 L1911.02 589.55 L1915.37 590.86 L1919.72 594.63 L1925.53 592.79 L1931.33 589.41 L1937.13 590.86 L1941.49 583.88 L1945.84 576.35 L1950.19 553.13 L1954.54 535.13 L1958.90 518.31 L1964.70 524.11 L1969.05 516.28 L1973.41 527.60 L1977.76 520.63 L1982.11 517.77 L1986.47 517.73 L1991.54 539.43 L1996.62 558.94 L2002.43 586.51 L2008.23 580.70 L2012.58 587.96 L2019.84 588.83 L2023.32 596.66 L2028.54 590.86 L2032.90 589.76 L2037.25 588.83 L2044.50 590.86 L2048.86 586.51 L2052.34 593.18 L2057.56 584.47 L2061.92 587.96 L2066.27 561.84 L2070.62 557.49 L2077.88 532.82 L2082.23 540.08 L2088.03 530.58 L2093.84 519.76 L2093.84 652.7 L1272.12 652.7 Z" fill="#5f9e7f" fill-opacity="0.21"/><path d="M1272.12 532.82 L1274.74 526.15 L1278.51 532.24 L1282.28 533.40 L1290.12 547.33 L1292.15 573.45 L1298.82 589.41 L1303.76 582.15 L1307.53 589.41 L1313.33 589.41 L1319.14 594.63 L1323.49 591.73 L1328.71 593.76 L1333.64 588.83 L1336.55 591.73 L1343.80 587.38 L1348.15 590.28 L1355.41 588.83 L1359.76 579.25 L1364.11 556.04 L1367.89 535.72 L1372.82 524.11 L1377.17 511.64 L1380.08 524.11 L1382.98 524.11 L1388.78 499.45 L1394.59 527.02 L1398.94 536.39 L1403.29 547.33 L1410.55 570.55 L1416.35 588.54 L1422.15 583.02 L1426.51 584.17 L1430.86 585.06 L1435.21 595.21 L1439.56 595.21 L1443.92 591.44 L1451.17 588.83 L1455.53 590.86 L1461.33 584.47 L1467.13 587.96 L1472.94 587.96 L1477.29 576.35 L1480.19 560.39 L1487.45 529.92 L1491.80 517.73 L1496.15 516.86 L1501.96 529.92 L1509.21 516.86 L1512.11 527.60 L1516.47 527.02 L1520.82 547.33 L1525.17 573.45 L1530.98 577.80 L1535.33 587.96 L1541.13 586.51 L1545.48 590.86 L1549.84 593.66 L1554.19 597.24 L1559.99 593.76 L1567.25 593.76 L1573.05 596.08 L1580.31 590.86 L1584.66 596.08 L1591.92 598.11 L1599.17 594.63 L1606.42 589.70 L1613.68 592.31 L1619.48 591.17 L1625.29 589.41 L1629.64 590.51 L1633.99 590.86 L1638.35 589.27 L1642.70 590.28 L1648.50 589.11 L1654.31 590.86 L1660.11 592.31 L1665.91 591.73 L1669.98 593.76 L1665.80 591.73 L1671.61 595.21 L1677.41 592.75 L1683.22 591.73 L1687.57 592.38 L1691.92 594.63 L1697.72 596.41 L1703.53 595.21 L1709.33 599.56 L1713.69 596.57 L1718.04 593.76 L1722.39 593.75 L1726.74 591.73 L1731.10 591.95 L1735.45 592.31 L1739.80 596.66 L1744.16 590.86 L1749.96 593.16 L1755.76 594.63 L1760.12 592.86 L1764.47 593.59 L1768.82 593.56 L1773.17 591.73 L1778.98 593.98 L1784.78 596.08 L1790.59 598.98 L1797.84 591.73 L1802.19 591.68 L1806.55 590.70 L1810.90 589.41 L1818.15 595.21 L1821.06 587.96 L1826.86 590.86 L1834.11 553.13 L1841.37 521.21 L1845.72 513.96 L1850.08 516.86 L1854.43 509.61 L1861.68 495.10 L1866.04 516.86 L1868.94 516.86 L1874.74 541.53 L1879.09 570.55 L1884.90 579.25 L1892.15 587.96 L1899.41 585.06 L1906.66 590.86 L1911.02 589.55 L1915.37 590.86 L1919.72 594.63 L1925.53 592.79 L1931.33 589.41 L1937.13 590.86 L1941.49 583.88 L1945.84 576.35 L1950.19 553.13 L1954.54 535.13 L1958.90 518.31 L1964.70 524.11 L1969.05 516.28 L1973.41 527.60 L1977.76 520.63 L1982.11 517.77 L1986.47 517.73 L1991.54 539.43 L1996.62 558.94 L2002.43 586.51 L2008.23 580.70 L2012.58 587.96 L2019.84 588.83 L2023.32 596.66 L2028.54 590.86 L2032.90 589.76 L2037.25 588.83 L2044.50 590.86 L2048.86 586.51 L2052.34 593.18 L2057.56 584.47 L2061.92 587.96 L2066.27 561.84 L2070.62 557.49 L2077.88 532.82 L2082.23 540.08 L2088.03 530.58 L2093.84 519.76" fill="none" stroke="#72a48b" stroke-width="1" stroke-linejoin="round"/></svg>
<div class="t" style="top:479.00px;font-size:12.2px;line-height:15.25px;color:#333333;letter-spacing:-0.255px;right:883.54px;">8.00%</div>
<div class="t" style="top:499.86px;font-size:12.2px;line-height:15.25px;color:#333333;letter-spacing:-0.255px;right:883.54px;">7.00%</div>
<div class="t" style="top:520.72px;font-size:12.2px;line-height:15.25px;color:#333333;letter-spacing:-0.255px;right:883.54px;">6.00%</div>
<div class="t" style="top:541.59px;font-size:12.2px;line-height:15.25px;color:#333333;letter-spacing:-0.255px;right:883.54px;">5.00%</div>
<div class="t" style="top:562.45px;font-size:12.2px;line-height:15.25px;color:#333333;letter-spacing:-0.255px;right:883.54px;">4.00%</div>
<div class="t" style="top:583.31px;font-size:12.2px;line-height:15.25px;color:#333333;letter-spacing:-0.255px;right:883.54px;">3.00%</div>
<div class="t" style="top:604.17px;font-size:12.2px;line-height:15.25px;color:#333333;letter-spacing:-0.255px;right:883.54px;">2.00%</div>
<div class="t" style="top:625.04px;font-size:12.2px;line-height:15.25px;color:#333333;letter-spacing:-0.255px;right:883.54px;">1.00%</div>
<div class="t" style="top:645.90px;font-size:12.2px;line-height:15.25px;color:#333333;letter-spacing:-0.255px;right:883.54px;">0.00%</div>
<div class="t" style="top:658.60px;font-size:12.2px;line-height:15.25px;color:#333333;letter-spacing:-0.150px;left:1309.51px;">01:00</div>
<div class="t" style="top:672.00px;font-size:12.2px;line-height:15.25px;color:#333333;letter-spacing:-0.101px;left:1294.15px;">2025-11-27</div>
<div class="t" style="top:658.60px;font-size:12.2px;line-height:15.25px;color:#333333;letter-spacing:-0.150px;left:1427.01px;">01:00</div>
<div class="t" style="top:672.00px;font-size:12.2px;line-height:15.25px;color:#333333;letter-spacing:-0.101px;left:1411.65px;">2025-11-28</div>
<div class="t" style="top:658.60px;font-size:12.2px;line-height:15.25px;color:#333333;letter-spacing:-0.150px;left:1544.21px;">01:00</div>
<div class="t" style="top:672.00px;font-size:12.2px;line-height:15.25px;color:#333333;letter-spacing:-0.101px;left:1528.85px;">2025-11-29</div>
<div class="t" style="top:658.60px;font-size:12.2px;line-height:15.25px;color:#333333;letter-spacing:-0.150px;left:1661.61px;">01:00</div>
<div class="t" style="top:672.00px;font-size:12.2px;line-height:15.25px;color:#333333;letter-spacing:-0.101px;left:1646.25px;">2025-11-30</div>
<div class="t" style="top:658.60px;font-size:12.2px;line-height:15.25px;color:#333333;letter-spacing:-0.150px;left:1778.91px;">01:00</div>
<div class="t" style="top:672.00px;font-size:12.2px;line-height:15.25px;color:#333333;letter-spacing:-0.102px;left:1763.11px;">2025-12-01</div>
<div class="t" style="top:658.60px;font-size:12.2px;line-height:15.25px;color:#333333;letter-spacing:-0.150px;left:1896.41px;">01:00</div>
<div class="t" style="top:672.00px;font-size:12.2px;line-height:15.25px;color:#333333;letter-spacing:-0.102px;left:1880.61px;">2025-12-02</div>
<div class="t" style="top:658.60px;font-size:12.2px;line-height:15.25px;color:#333333;letter-spacing:-0.150px;left:2013.61px;">01:00</div>
<div class="t" style="top:672.00px;font-size:12.2px;line-height:15.25px;color:#333333;letter-spacing:-0.102px;left:1997.81px;">2025-12-03</div>
<div class="r" style="left:1212.90px;top:713.70px;width:898.00px;height:265.40px;background:#ffffff;border:1px solid #f0f0f0;box-shadow:0 1px 1.5px rgba(0,0,0,0.2);"></div>
<div class="t" style="top:722.45px;font-size:17.5px;line-height:21.875px;color:#2a65ab;letter-spacing:-0.828px;left:1221.60px;">Server load</div>
<svg class="i" style="left:1213px;top:714px" width="898" height="265" viewBox="1213 714 898 265"><path d="M1252.2 767.70 H2103.4" stroke="#eaeaea" stroke-width="1"/><path d="M1252.2 823.20 H2103.4" stroke="#eaeaea" stroke-width="1"/><path d="M1252.2 878.80 H2103.4" stroke="#eaeaea" stroke-width="1"/><path d="M1252.2 935.00 H2103.4" stroke="#eaeaea" stroke-width="1"/><path d="M1313.60 760 V935" stroke="#eaeaea" stroke-width="1"/><path d="M1432.50 760 V935" stroke="#eaeaea" stroke-width="1"/><path d="M1551.40 760 V935" stroke="#eaeaea" stroke-width="1"/><path d="M1670.40 760 V935" stroke="#eaeaea" stroke-width="1"/><path d="M1789.40 760 V935" stroke="#eaeaea" stroke-width="1"/><path d="M1908.80 760 V935" stroke="#eaeaea" stroke-width="1"/><path d="M2027.70 760 V935" stroke="#eaeaea" stroke-width="1"/><path d="M1260.90 834.33 L1263.38 830.60 L1265.87 831.34 L1268.36 813.18 L1271.59 816.92 L1275.82 839.30 L1280.80 867.91 L1285.77 872.89 L1288.26 870.40 L1290.75 871.64 L1292.74 860.45 L1295.72 879.10 L1297.46 891.54 L1300.70 880.35 L1303.18 881.09 L1305.67 887.06 L1309.40 881.59 L1313.63 877.11 L1315.62 881.09 L1318.11 874.13 L1320.10 882.84 L1323.08 876.62 L1326.82 880.35 L1331.79 876.62 L1336.77 882.84 L1341.74 875.37 L1345.47 877.11 L1347.96 865.42 L1350.45 866.17 L1354.93 823.13 L1357.41 845.52 L1362.89 811.94 L1366.62 810.70 L1370.35 806.97 L1374.58 814.93 L1379.55 773.38 L1384.03 839.30 L1389.00 824.38 L1393.98 850.50 L1396.47 852.24 L1399.45 844.28 L1404.43 879.10 L1406.92 872.89 L1409.65 884.08 L1412.14 871.14 L1416.87 859.20 L1419.35 874.13 L1421.84 867.91 L1425.82 882.84 L1430.05 889.05 L1432.54 884.08 L1434.53 887.06 L1437.01 877.86 L1439.50 883.58 L1441.99 875.37 L1444.48 885.32 L1449.95 870.40 L1452.44 874.13 L1456.67 862.94 L1461.64 882.84 L1464.88 874.13 L1469.35 878.61 L1471.84 850.50 L1474.33 857.96 L1479.05 815.67 L1481.54 816.92 L1486.52 797.01 L1491.49 813.18 L1493.98 816.92 L1496.47 823.88 L1498.96 806.97 L1503.93 806.97 L1506.42 821.39 L1508.91 811.94 L1511.39 820.65 L1513.88 855.47 L1516.37 862.94 L1518.86 860.45 L1521.34 872.89 L1526.32 879.10 L1531.29 889.05 L1533.78 870.40 L1536.27 876.62 L1538.76 876.62 L1543.23 885.32 L1546.22 874.13 L1548.71 879.10 L1553.68 871.64 L1556.17 885.32 L1558.66 891.54 L1561.14 876.62 L1564.38 892.79 L1568.11 891.54 L1573.08 872.89 L1576.82 886.57 L1580.55 879.10 L1585.52 890.30 L1588.01 874.13 L1592.49 892.79 L1595.47 885.32 L1599.20 892.79 L1602.94 889.05 L1607.91 889.05 L1612.89 882.84 L1617.36 870.40 L1624.08 875.37 L1627.31 890.30 L1630.30 870.40 L1632.79 892.79 L1637.76 885.32 L1640.75 880.35 L1646.47 882.84 L1649.70 873.63 L1653.18 885.32 L1657.66 867.91 L1661.39 882.84 L1665.12 884.08 L1669.95 894.03 L1672.44 881.59 L1674.93 895.27 L1679.90 882.84 L1683.63 887.81 L1687.36 881.59 L1689.85 889.05 L1692.34 874.13 L1697.31 875.37 L1699.80 874.13 L1704.78 889.05 L1707.26 882.84 L1709.75 896.52 L1717.21 887.81 L1719.70 886.57 L1722.19 876.62 L1724.68 879.10 L1727.16 876.62 L1732.14 895.27 L1734.63 869.15 L1739.60 889.05 L1742.09 884.08 L1745.82 891.54 L1749.55 882.84 L1752.04 886.57 L1758.26 884.08 L1764.48 882.84 L1769.45 871.64 L1774.43 885.32 L1776.92 884.08 L1779.40 895.27 L1784.38 885.32 L1786.87 880.35 L1789.35 884.08 L1791.84 879.10 L1796.32 871.64 L1798.81 881.59 L1803.03 877.86 L1805.52 881.59 L1808.76 871.64 L1814.23 890.30 L1819.20 884.08 L1821.69 877.11 L1823.68 879.10 L1826.67 859.20 L1831.14 827.36 L1834.13 834.33 L1837.86 829.35 L1843.58 794.53 L1846.57 813.18 L1849.05 806.97 L1851.04 809.45 L1854.03 783.33 L1855.27 787.06 L1861.00 775.87 L1863.98 810.70 L1867.71 797.01 L1871.44 849.25 L1873.93 846.77 L1878.91 864.18 L1883.88 881.59 L1886.37 879.10 L1888.86 882.84 L1891.34 875.37 L1895.82 883.58 L1900.80 870.40 L1906.27 877.11 L1908.76 877.86 L1911.24 887.81 L1914.98 885.32 L1918.71 874.13 L1923.68 885.32 L1929.15 871.64 L1933.63 884.08 L1935.62 860.45 L1938.61 876.62 L1943.58 874.13 L1945.57 875.37 L1948.06 840.55 L1951.04 830.60 L1955.27 799.50 L1959.75 819.40 L1962.99 788.31 L1965.47 819.40 L1969.70 809.45 L1972.19 821.89 L1975.42 811.94 L1979.65 829.35 L1984.63 789.55 L1988.36 823.13 L1990.85 823.13 L1994.58 857.96 L2000.80 879.10 L2007.01 880.35 L2009.50 889.05 L2011.99 881.59 L2015.72 882.84 L2019.45 876.62 L2023.68 889.05 L2027.66 876.62 L2029.40 884.08 L2031.89 864.18 L2034.38 878.61 L2038.11 874.13 L2041.84 896.52 L2045.07 877.11 L2049.30 884.08 L2053.03 875.37 L2056.77 879.10 L2059.75 870.40 L2062.99 870.40 L2066.72 841.79 L2071.69 857.96 L2074.18 834.33 L2079.15 818.91 L2084.13 833.83 L2086.62 820.65 L2089.10 824.38 L2094.08 813.18 L2094.08 935 L1260.90 935 Z" fill="#5f9e7f" fill-opacity="0.21"/><path d="M1260.90 834.33 L1263.38 830.60 L1265.87 831.34 L1268.36 813.18 L1271.59 816.92 L1275.82 839.30 L1280.80 867.91 L1285.77 872.89 L1288.26 870.40 L1290.75 871.64 L1292.74 860.45 L1295.72 879.10 L1297.46 891.54 L1300.70 880.35 L1303.18 881.09 L1305.67 887.06 L1309.40 881.59 L1313.63 877.11 L1315.62 881.09 L1318.11 874.13 L1320.10 882.84 L1323.08 876.62 L1326.82 880.35 L1331.79 876.62 L1336.77 882.84 L1341.74 875.37 L1345.47 877.11 L1347.96 865.42 L1350.45 866.17 L1354.93 823.13 L1357.41 845.52 L1362.89 811.94 L1366.62 810.70 L1370.35 806.97 L1374.58 814.93 L1379.55 773.38 L1384.03 839.30 L1389.00 824.38 L1393.98 850.50 L1396.47 852.24 L1399.45 844.28 L1404.43 879.10 L1406.92 872.89 L1409.65 884.08 L1412.14 871.14 L1416.87 859.20 L1419.35 874.13 L1421.84 867.91 L1425.82 882.84 L1430.05 889.05 L1432.54 884.08 L1434.53 887.06 L1437.01 877.86 L1439.50 883.58 L1441.99 875.37 L1444.48 885.32 L1449.95 870.40 L1452.44 874.13 L1456.67 862.94 L1461.64 882.84 L1464.88 874.13 L1469.35 878.61 L1471.84 850.50 L1474.33 857.96 L1479.05 815.67 L1481.54 816.92 L1486.52 797.01 L1491.49 813.18 L1493.98 816.92 L1496.47 823.88 L1498.96 806.97 L1503.93 806.97 L1506.42 821.39 L1508.91 811.94 L1511.39 820.65 L1513.88 855.47 L1516.37 862.94 L1518.86 860.45 L1521.34 872.89 L1526.32 879.10 L1531.29 889.05 L1533.78 870.40 L1536.27 876.62 L1538.76 876.62 L1543.23 885.32 L1546.22 874.13 L1548.71 879.10 L1553.68 871.64 L1556.17 885.32 L1558.66 891.54 L1561.14 876.62 L1564.38 892.79 L1568.11 891.54 L1573.08 872.89 L1576.82 886.57 L1580.55 879.10 L1585.52 890.30 L1588.01 874.13 L1592.49 892.79 L1595.47 885.32 L1599.20 892.79 L1602.94 889.05 L1607.91 889.05 L1612.89 882.84 L1617.36 870.40 L1624.08 875.37 L1627.31 890.30 L1630.30 870.40 L1632.79 892.79 L1637.76 885.32 L1640.75 880.35 L1646.47 882.84 L1649.70 873.63 L1653.18 885.32 L1657.66 867.91 L1661.39 882.84 L1665.12 884.08 L1669.95 894.03 L1672.44 881.59 L1674.93 895.27 L1679.90 882.84 L1683.63 887.81 L1687.36 881.59 L1689.85 889.05 L1692.34 874.13 L1697.31 875.37 L1699.80 874.13 L1704.78 889.05 L1707.26 882.84 L1709.75 896.52 L1717.21 887.81 L1719.70 886.57 L1722.19 876.62 L1724.68 879.10 L1727.16 876.62 L1732.14 895.27 L1734.63 869.15 L1739.60 889.05 L1742.09 884.08 L1745.82 891.54 L1749.55 882.84 L1752.04 886.57 L1758.26 884.08 L1764.48 882.84 L1769.45 871.64 L1774.43 885.32 L1776.92 884.08 L1779.40 895.27 L1784.38 885.32 L1786.87 880.35 L1789.35 884.08 L1791.84 879.10 L1796.32 871.64 L1798.81 881.59 L1803.03 877.86 L1805.52 881.59 L1808.76 871.64 L1814.23 890.30 L1819.20 884.08 L1821.69 877.11 L1823.68 879.10 L1826.67 859.20 L1831.14 827.36 L1834.13 834.33 L1837.86 829.35 L1843.58 794.53 L1846.57 813.18 L1849.05 806.97 L1851.04 809.45 L1854.03 783.33 L1855.27 787.06 L1861.00 775.87 L1863.98 810.70 L1867.71 797.01 L1871.44 849.25 L1873.93 846.77 L1878.91 864.18 L1883.88 881.59 L1886.37 879.10 L1888.86 882.84 L1891.34 875.37 L1895.82 883.58 L1900.80 870.40 L1906.27 877.11 L1908.76 877.86 L1911.24 887.81 L1914.98 885.32 L1918.71 874.13 L1923.68 885.32 L1929.15 871.64 L1933.63 884.08 L1935.62 860.45 L1938.61 876.62 L1943.58 874.13 L1945.57 875.37 L1948.06 840.55 L1951.04 830.60 L1955.27 799.50 L1959.75 819.40 L1962.99 788.31 L1965.47 819.40 L1969.70 809.45 L1972.19 821.89 L1975.42 811.94 L1979.65 829.35 L1984.63 789.55 L1988.36 823.13 L1990.85 823.13 L1994.58 857.96 L2000.80 879.10 L2007.01 880.35 L2009.50 889.05 L2011.99 881.59 L2015.72 882.84 L2019.45 876.62 L2023.68 889.05 L2027.66 876.62 L2029.40 884.08 L2031.89 864.18 L2034.38 878.61 L2038.11 874.13 L2041.84 896.52 L2045.07 877.11 L2049.30 884.08 L2053.03 875.37 L2056.77 879.10 L2059.75 870.40 L2062.99 870.40 L2066.72 841.79 L2071.69 857.96 L2074.18 834.33 L2079.15 818.91 L2084.13 833.83 L2086.62 820.65 L2089.10 824.38 L2094.08 813.18" fill="none" stroke="#72a48b" stroke-width="1" stroke-linejoin="round"/></svg>
<div class="t" style="top:760.90px;font-size:12.2px;line-height:15.25px;color:#333333;letter-spacing:-0.438px;right:894.56px;">3.00</div>
<div class="t" style="top:816.40px;font-size:12.2px;line-height:15.25px;color:#333333;letter-spacing:-0.438px;right:894.56px;">2.00</div>
<div class="t" style="top:872.00px;font-size:12.2px;line-height:15.25px;color:#333333;letter-spacing:-0.438px;right:894.56px;">1.00</div>
<div class="t" style="top:928.20px;font-size:12.2px;line-height:15.25px;color:#333333;letter-spacing:-0.438px;right:894.56px;">0.00</div>
<div class="t" style="top:940.70px;font-size:12.2px;line-height:15.25px;color:#333333;letter-spacing:-0.150px;left:1298.71px;">01:00</div>
<div class="t" style="top:954.40px;font-size:12.2px;line-height:15.25px;color:#333333;letter-spacing:-0.101px;left:1283.35px;">2025-11-27</div>
<div class="t" style="top:940.70px;font-size:12.2px;line-height:15.25px;color:#333333;letter-spacing:-0.150px;left:1417.61px;">01:00</div>
<div class="t" style="top:954.40px;font-size:12.2px;line-height:15.25px;color:#333333;letter-spacing:-0.101px;left:1402.25px;">2025-11-28</div>
<div class="t" style="top:940.70px;font-size:12.2px;line-height:15.25px;color:#333333;letter-spacing:-0.150px;left:1536.51px;">01:00</div>
<div class="t" style="top:954.40px;font-size:12.2px;line-height:15.25px;color:#333333;letter-spacing:-0.101px;left:1521.15px;">2025-11-29</div>
<div class="t" style="top:940.70px;font-size:12.2px;line-height:15.25px;color:#333333;letter-spacing:-0.150px;left:1655.51px;">01:00</div>
<div class="t" style="top:954.40px;font-size:12.2px;line-height:15.25px;color:#333333;letter-spacing:-0.101px;left:1640.15px;">2025-11-30</div>
<div class="t" style="top:940.70px;font-size:12.2px;line-height:15.25px;color:#333333;letter-spacing:-0.150px;left:1774.51px;">01:00</div>
<div class="t" style="top:954.40px;font-size:12.2px;line-height:15.25px;color:#333333;letter-spacing:-0.102px;left:1758.71px;">2025-12-01</div>
<div class="t" style="top:940.70px;font-size:12.2px;line-height:15.25px;color:#333333;letter-spacing:-0.150px;left:1893.91px;">01:00</div>
<div class="t" style="top:954.40px;font-size:12.2px;line-height:15.25px;color:#333333;letter-spacing:-0.102px;left:1878.11px;">2025-12-02</div>
<div class="t" style="top:940.70px;font-size:12.2px;line-height:15.25px;color:#333333;letter-spacing:-0.150px;left:2012.81px;">01:00</div>
<div class="t" style="top:954.40px;font-size:12.2px;line-height:15.25px;color:#333333;letter-spacing:-0.102px;left:1997.01px;">2025-12-03</div>
<div class="r" style="left:1196px;top:62px;width:931px;height:1127.5px;overflow:hidden;">
<div class="r" style="left:16.40px;top:934.30px;width:899.00px;height:260.00px;background:#ffffff;border:1px solid #f0f0f0;box-shadow:0 1px 1.5px rgba(0,0,0,0.2);"></div>
<div class="t" style="top:945.05px;font-size:17.5px;line-height:21.875px;color:#2a65ab;letter-spacing:-0.802px;left:25.30px;">Memory Usage</div>
<div class="r" style="left:694.20px;top:943.80px;width:102.80px;height:24.40px;background:#ffffff;border-radius:3px;box-shadow:0 1px 2px rgba(0,0,0,0.25);"></div>
<div class="r" style="left:702.80px;top:951.20px;width:9.6px;height:9.6px;border-radius:50%;background:#0b6b35;"></div><div class="t" style="top:949.00px;font-size:12.2px;line-height:15.25px;color:#2a65ab;letter-spacing:-0.235px;left:718.60px;">Total Memory</div>
<div class="r" style="left:801.50px;top:943.80px;width:104.90px;height:24.40px;background:#ffffff;border-radius:3px;box-shadow:0 1px 2px rgba(0,0,0,0.25);"></div>
<div class="r" style="left:810.50px;top:951.20px;width:9.6px;height:9.6px;border-radius:50%;background:#1d5cb5;"></div><div class="t" style="top:949.00px;font-size:12.2px;line-height:15.25px;color:#2a65ab;letter-spacing:-0.396px;left:826.30px;">Used Memory</div>
<svg class="i" style="left:17px;top:978px" width="898" height="160" viewBox="1213 1040 898 160"><path d="M1270 1054.40 H2102.4" stroke="#eaeaea" stroke-width="1"/><path d="M1270 1075.32 H2102.4" stroke="#eaeaea" stroke-width="1"/><path d="M1270 1096.24 H2102.4" stroke="#eaeaea" stroke-width="1"/><path d="M1270 1117.16 H2102.4" stroke="#eaeaea" stroke-width="1"/><path d="M1270 1138.08 H2102.4" stroke="#eaeaea" stroke-width="1"/><path d="M1270 1159.00 H2102.4" stroke="#eaeaea" stroke-width="1"/><path d="M1270 1179.92 H2102.4" stroke="#eaeaea" stroke-width="1"/><path d="M1270 1200.84 H2102.4" stroke="#eaeaea" stroke-width="1"/><path d="M1329.20 1048 V1200" stroke="#eaeaea" stroke-width="1"/><path d="M1446.30 1048 V1200" stroke="#eaeaea" stroke-width="1"/><path d="M1562.30 1048 V1200" stroke="#eaeaea" stroke-width="1"/><path d="M1679.20 1048 V1200" stroke="#eaeaea" stroke-width="1"/><path d="M1796.10 1048 V1200" stroke="#eaeaea" stroke-width="1"/><path d="M1912.40 1048 V1200" stroke="#eaeaea" stroke-width="1"/><path d="M2029.50 1048 V1200" stroke="#eaeaea" stroke-width="1"/><rect x="1278" y="1057.6" width="815.9" height="160" fill="#5f9e7f" fill-opacity="0.21"/><path d="M1278 1057.6 H2093.9" stroke="#72a48b" stroke-width="1.1"/></svg>
<div class="t" style="top:985.60px;font-size:12.2px;line-height:15.25px;color:#333333;letter-spacing:-0.465px;right:859.94px;">128 GiB</div>
<div class="t" style="top:1006.52px;font-size:12.2px;line-height:15.25px;color:#333333;letter-spacing:-0.455px;right:859.94px;">112 GiB</div>
<div class="t" style="top:1027.44px;font-size:12.2px;line-height:15.25px;color:#333333;letter-spacing:-0.459px;right:859.94px;">96 GiB</div>
<div class="t" style="top:1048.36px;font-size:12.2px;line-height:15.25px;color:#333333;letter-spacing:-0.459px;right:859.94px;">80 GiB</div>
<div class="t" style="top:1069.28px;font-size:12.2px;line-height:15.25px;color:#333333;letter-spacing:-0.459px;right:859.94px;">64 GiB</div>
<div class="t" style="top:1090.20px;font-size:12.2px;line-height:15.25px;color:#333333;letter-spacing:-0.459px;right:859.94px;">48 GiB</div>
<div class="t" style="top:1111.12px;font-size:12.2px;line-height:15.25px;color:#333333;letter-spacing:-0.459px;right:859.94px;">32 GiB</div>
</div>
</body></html>
